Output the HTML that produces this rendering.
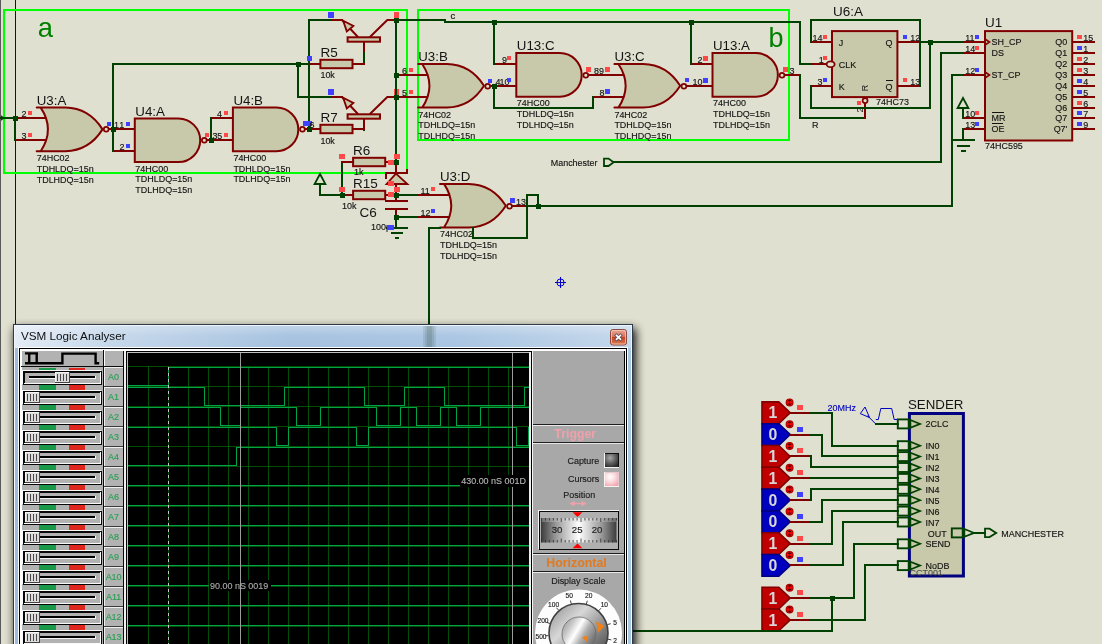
<!DOCTYPE html>
<html lang="en"><head><meta charset="utf-8"><title>Manchester encoder schematic - VSM Logic Analyser</title>
<style>
html,body{margin:0;padding:0;background:#e0e0d0;}
body{width:1102px;height:644px;overflow:hidden;}
svg{display:block;will-change:transform;font-family:'Liberation Sans', Arial, sans-serif;}
svg text{font-family:'Liberation Sans',Arial,sans-serif;}
</style></head><body>
<svg width="1102" height="644" viewBox="0 0 1102 644">
<rect x="0" y="0" width="1102" height="644" fill="#e0e0d0"/>
<rect x="0" y="0" width="1" height="644" fill="#5a5a5a" shape-rendering="crispEdges"/>
<rect x="15" y="0" width="1" height="330" fill="#0000c0" shape-rendering="crispEdges"/>
<rect x="4" y="10" width="403" height="163" fill="none" stroke="#00ff00" stroke-width="2" shape-rendering="crispEdges"/>
<rect x="418" y="10" width="371" height="130" fill="none" stroke="#00ff00" stroke-width="2" shape-rendering="crispEdges"/>
<text x="37.8" y="36.6" font-size="27.4" fill="#008000" text-anchor="start" font-weight="normal">a</text>
<text x="768.5" y="47.2" font-size="27" fill="#008000" text-anchor="start" font-weight="normal">b</text>
<polyline points="0,118 15,118 15,140" fill="none" stroke="#004000" stroke-width="2" stroke-linejoin="miter" stroke-linecap="square" shape-rendering="crispEdges"/>
<path d="M1,115.2 L5,118 L1,120.8 Z" fill="#004000"/>
<line x1="14.9" y1="118" x2="46.51" y2="118" stroke="#800000" stroke-width="2" stroke-linecap="butt" shape-rendering="crispEdges"/>
<line x1="14.9" y1="140" x2="46.51" y2="140" stroke="#800000" stroke-width="2" stroke-linecap="butt" shape-rendering="crispEdges"/>
<path d="M36.7,107.6 L65.476,107.6 Q89.02,108.036 102.5,129.4 Q89.02,150.764 65.476,151.2 L36.7,151.2 L40.7,151.2 Q55.2,129.4 40.7,107.6 L36.7,107.6 Z" fill="#c8c8aa" stroke="#800000" stroke-width="2" stroke-linejoin="round"/>
<line x1="108.1" y1="129" x2="123.9" y2="129" stroke="#800000" stroke-width="2" stroke-linecap="butt" shape-rendering="crispEdges"/>
<circle cx="106.2" cy="129.3" r="2.4" fill="#e0e0d0" stroke="#800000" stroke-width="1.7"/>
<text x="36.7" y="104.6" font-size="13.3" fill="#141414" text-anchor="start" font-weight="normal">U3:A</text>
<text transform="translate(36.7,161.1) scale(0.925,1)" font-size="9.7" fill="#141414" text-anchor="start" font-weight="normal" stroke="#141414" stroke-width="0.15">74HC02</text>
<text transform="translate(36.7,171.8) scale(0.925,1)" font-size="9.7" fill="#141414" text-anchor="start" font-weight="normal" stroke="#141414" stroke-width="0.15">TDHLDQ=15n</text>
<text transform="translate(36.7,182.5) scale(0.925,1)" font-size="9.7" fill="#141414" text-anchor="start" font-weight="normal" stroke="#141414" stroke-width="0.15">TDLHDQ=15n</text>
<text transform="translate(21.5,117) scale(0.925,1)" font-size="9.7" fill="#141414" text-anchor="start" font-weight="normal" stroke="#141414" stroke-width="0.15">2</text>
<rect x="28" y="111" width="4" height="4" fill="#ff4848" shape-rendering="crispEdges"/>
<text transform="translate(21.5,139) scale(0.925,1)" font-size="9.7" fill="#141414" text-anchor="start" font-weight="normal" stroke="#141414" stroke-width="0.15">3</text>
<rect x="28" y="133" width="4" height="4" fill="#ff4848" shape-rendering="crispEdges"/>
<polyline points="113,64 113,151" fill="none" stroke="#004000" stroke-width="2" stroke-linejoin="miter" stroke-linecap="square" shape-rendering="crispEdges"/>
<polyline points="113,64 298,64 309,64" fill="none" stroke="#004000" stroke-width="2" stroke-linejoin="miter" stroke-linecap="square" shape-rendering="crispEdges"/>
<rect x="107" y="122" width="4" height="4" fill="#4040ff" shape-rendering="crispEdges"/>
<rect x="126" y="122" width="4" height="4" fill="#4040ff" shape-rendering="crispEdges"/>
<text transform="translate(114,127.8) scale(0.925,1)" font-size="9.7" fill="#141414" text-anchor="start" font-weight="normal" stroke="#141414" stroke-width="0.15">1</text>
<text transform="translate(119.3,127.8) scale(0.925,1)" font-size="9.7" fill="#141414" text-anchor="start" font-weight="normal" stroke="#141414" stroke-width="0.15">1</text>
<line x1="113" y1="129" x2="134.8" y2="129" stroke="#800000" stroke-width="2" stroke-linecap="butt" shape-rendering="crispEdges"/>
<line x1="113" y1="151" x2="134.8" y2="151" stroke="#800000" stroke-width="2" stroke-linecap="butt" shape-rendering="crispEdges"/>
<path d="M134.8,118.5 L178.4,118.5 A21.8,21.8 0 0 1 178.4,162.1 L134.8,162.1 Z" fill="#c8c8aa" stroke="#800000" stroke-width="2" stroke-linejoin="miter"/>
<line x1="206.2" y1="140" x2="222" y2="140" stroke="#800000" stroke-width="2" stroke-linecap="butt" shape-rendering="crispEdges"/>
<circle cx="204.3" cy="140.3" r="2.4" fill="#e0e0d0" stroke="#800000" stroke-width="1.7"/>
<text x="135.3" y="115.7" font-size="13.3" fill="#141414" text-anchor="start" font-weight="normal">U4:A</text>
<text transform="translate(135.3,171.6) scale(0.925,1)" font-size="9.7" fill="#141414" text-anchor="start" font-weight="normal" stroke="#141414" stroke-width="0.15">74HC00</text>
<text transform="translate(135.3,182.45) scale(0.925,1)" font-size="9.7" fill="#141414" text-anchor="start" font-weight="normal" stroke="#141414" stroke-width="0.15">TDHLDQ=15n</text>
<text transform="translate(135.3,193.3) scale(0.925,1)" font-size="9.7" fill="#141414" text-anchor="start" font-weight="normal" stroke="#141414" stroke-width="0.15">TDLHDQ=15n</text>
<text transform="translate(119.5,149.8) scale(0.925,1)" font-size="9.7" fill="#141414" text-anchor="start" font-weight="normal" stroke="#141414" stroke-width="0.15">2</text>
<rect x="126" y="144" width="4" height="4" fill="#4040ff" shape-rendering="crispEdges"/>
<polyline points="211,118 211,140" fill="none" stroke="#004000" stroke-width="2" stroke-linejoin="miter" stroke-linecap="square" shape-rendering="crispEdges"/>
<line x1="211.1" y1="118" x2="232.9" y2="118" stroke="#800000" stroke-width="2" stroke-linecap="butt" shape-rendering="crispEdges"/>
<line x1="211.1" y1="140" x2="232.9" y2="140" stroke="#800000" stroke-width="2" stroke-linecap="butt" shape-rendering="crispEdges"/>
<path d="M232.9,107.6 L276.5,107.6 A21.8,21.8 0 0 1 276.5,151.2 L232.9,151.2 Z" fill="#c8c8aa" stroke="#800000" stroke-width="2" stroke-linejoin="miter"/>
<line x1="304.3" y1="129" x2="320.1" y2="129" stroke="#800000" stroke-width="2" stroke-linecap="butt" shape-rendering="crispEdges"/>
<circle cx="302.4" cy="129.3" r="2.4" fill="#e0e0d0" stroke="#800000" stroke-width="1.7"/>
<text x="233.4" y="104.8" font-size="13.3" fill="#141414" text-anchor="start" font-weight="normal">U4:B</text>
<text transform="translate(233.4,160.7) scale(0.925,1)" font-size="9.7" fill="#141414" text-anchor="start" font-weight="normal" stroke="#141414" stroke-width="0.15">74HC00</text>
<text transform="translate(233.4,171.55) scale(0.925,1)" font-size="9.7" fill="#141414" text-anchor="start" font-weight="normal" stroke="#141414" stroke-width="0.15">TDHLDQ=15n</text>
<text transform="translate(233.4,182.4) scale(0.925,1)" font-size="9.7" fill="#141414" text-anchor="start" font-weight="normal" stroke="#141414" stroke-width="0.15">TDLHDQ=15n</text>
<text transform="translate(217,116.8) scale(0.925,1)" font-size="9.7" fill="#141414" text-anchor="start" font-weight="normal" stroke="#141414" stroke-width="0.15">4</text>
<rect x="224" y="111" width="4" height="4" fill="#ff4848" shape-rendering="crispEdges"/>
<rect x="205" y="133" width="4" height="4" fill="#ff4848" shape-rendering="crispEdges"/>
<rect x="224" y="133" width="4" height="4" fill="#ff4848" shape-rendering="crispEdges"/>
<text transform="translate(212.5,138.8) scale(0.925,1)" font-size="9.7" fill="#141414" text-anchor="start" font-weight="normal" stroke="#141414" stroke-width="0.15">3</text>
<text transform="translate(217.3,138.8) scale(0.925,1)" font-size="9.7" fill="#141414" text-anchor="start" font-weight="normal" stroke="#141414" stroke-width="0.15">5</text>
<polyline points="298,64 298,97 331,97" fill="none" stroke="#004000" stroke-width="2" stroke-linejoin="miter" stroke-linecap="square" shape-rendering="crispEdges"/>
<polyline points="331,20 309,20 309,129" fill="none" stroke="#004000" stroke-width="2" stroke-linejoin="miter" stroke-linecap="square" shape-rendering="crispEdges"/>
<rect x="303" y="121" width="5" height="5" fill="#4040ff" shape-rendering="crispEdges"/>
<rect x="307" y="121" width="5" height="5" fill="#4040ff" shape-rendering="crispEdges"/>
<text transform="translate(309.5,127.5) scale(0.925,1)" font-size="9.7" fill="#141414" text-anchor="start" font-weight="normal" stroke="#141414" stroke-width="0.15">6</text>
<rect x="307" y="56" width="5" height="5" fill="#4040ff" shape-rendering="crispEdges"/>
<line x1="309.2" y1="64" x2="363.7" y2="64" stroke="#800000" stroke-width="2" stroke-linecap="butt" shape-rendering="crispEdges"/>
<rect x="320.4" y="59.8" width="32.1" height="8.4" fill="#c8c8aa" stroke="#800000" stroke-width="2"/>
<text x="320.4" y="56.8" font-size="13.5" fill="#141414" text-anchor="start" font-weight="normal">R5</text>
<text transform="translate(320.4,77.8) scale(0.925,1)" font-size="9.7" fill="#141414" text-anchor="start" font-weight="normal" stroke="#141414" stroke-width="0.15">10k</text>
<line x1="309.2" y1="129" x2="363.7" y2="129" stroke="#800000" stroke-width="2" stroke-linecap="butt" shape-rendering="crispEdges"/>
<rect x="320.4" y="124.8" width="32.1" height="8.4" fill="#c8c8aa" stroke="#800000" stroke-width="2"/>
<text x="320.4" y="121.8" font-size="13.5" fill="#141414" text-anchor="start" font-weight="normal">R7</text>
<text transform="translate(320.4,144) scale(0.925,1)" font-size="9.7" fill="#141414" text-anchor="start" font-weight="normal" stroke="#141414" stroke-width="0.15">10k</text>
<line x1="331" y1="20" x2="342.5" y2="20" stroke="#800000" stroke-width="2" stroke-linecap="butt" shape-rendering="crispEdges"/>
<line x1="387" y1="20" x2="396.4" y2="20" stroke="#800000" stroke-width="2" stroke-linecap="butt" shape-rendering="crispEdges"/>
<path d="M342,20 L357.7,36.8 M370.2,36.8 L387.3,20" stroke="#800000" stroke-width="2" fill="none" stroke-linecap="round"/>
<path d="M343.2,20.8 L353.4,26 L346.8,31.4 Z" fill="#c8c8aa" stroke="#800000" stroke-width="1.8" stroke-linejoin="miter"/>
<rect x="347.6" y="37.3" width="32.4" height="4.4" fill="#c8c8aa" stroke="#800000" stroke-width="2"/>
<line x1="364" y1="42" x2="364" y2="53" stroke="#800000" stroke-width="2" stroke-linecap="butt" shape-rendering="crispEdges"/>
<polyline points="364,53 364,64" fill="none" stroke="#004000" stroke-width="2" stroke-linejoin="miter" stroke-linecap="square" shape-rendering="crispEdges"/>
<line x1="353" y1="64" x2="365" y2="64" stroke="#800000" stroke-width="2" stroke-linecap="butt" shape-rendering="crispEdges"/>
<line x1="331" y1="97" x2="342.5" y2="97" stroke="#800000" stroke-width="2" stroke-linecap="butt" shape-rendering="crispEdges"/>
<line x1="387" y1="97" x2="396.4" y2="97" stroke="#800000" stroke-width="2" stroke-linecap="butt" shape-rendering="crispEdges"/>
<path d="M342,97 L357.7,113.8 M370.2,113.8 L387.3,97" stroke="#800000" stroke-width="2" fill="none" stroke-linecap="round"/>
<path d="M343.2,97.8 L353.4,103 L346.8,108.4 Z" fill="#c8c8aa" stroke="#800000" stroke-width="1.8" stroke-linejoin="miter"/>
<rect x="347.6" y="114.3" width="32.4" height="4.4" fill="#c8c8aa" stroke="#800000" stroke-width="2"/>
<line x1="364" y1="119" x2="364" y2="130" stroke="#800000" stroke-width="2" stroke-linecap="butt" shape-rendering="crispEdges"/>
<polyline points="364,130 364,129" fill="none" stroke="#004000" stroke-width="2" stroke-linejoin="miter" stroke-linecap="square" shape-rendering="crispEdges"/>
<line x1="353" y1="129" x2="365" y2="129" stroke="#800000" stroke-width="2" stroke-linecap="butt" shape-rendering="crispEdges"/>
<rect x="328" y="12" width="6" height="6" fill="#4040ff" shape-rendering="crispEdges"/>
<rect x="328" y="89" width="6" height="6" fill="#4040ff" shape-rendering="crispEdges"/>
<rect x="394" y="12" width="5" height="5" fill="#ff4848" shape-rendering="crispEdges"/>
<rect x="394" y="12" width="5" height="6" fill="#ff4848" shape-rendering="crispEdges"/>
<rect x="394" y="89" width="5" height="6" fill="#ff4848" shape-rendering="crispEdges"/>
<polyline points="396,20 396,173" fill="none" stroke="#004000" stroke-width="2" stroke-linejoin="miter" stroke-linecap="square" shape-rendering="crispEdges"/>
<polyline points="396,20 445,20" fill="none" stroke="#004000" stroke-width="2" stroke-linejoin="miter" stroke-linecap="square" shape-rendering="crispEdges"/>
<polyline points="445,22 800,22 800,64 811,64" fill="none" stroke="#004000" stroke-width="2" stroke-linejoin="miter" stroke-linecap="square" shape-rendering="crispEdges"/>
<text x="450.5" y="19.4" font-size="9.5" fill="#141414" text-anchor="start" font-weight="normal" stroke="#141414" stroke-width="0.15">c</text>
<polyline points="494,22 494,64" fill="none" stroke="#004000" stroke-width="2" stroke-linejoin="miter" stroke-linecap="square" shape-rendering="crispEdges"/>
<polyline points="691,22 691,64" fill="none" stroke="#004000" stroke-width="2" stroke-linejoin="miter" stroke-linecap="square" shape-rendering="crispEdges"/>
<polyline points="342,162 342,195" fill="none" stroke="#004000" stroke-width="2" stroke-linejoin="miter" stroke-linecap="square" shape-rendering="crispEdges"/>
<line x1="341.9" y1="162" x2="396.4" y2="162" stroke="#800000" stroke-width="2" stroke-linecap="butt" shape-rendering="crispEdges"/>
<rect x="353.1" y="157.8" width="32.1" height="8.4" fill="#c8c8aa" stroke="#800000" stroke-width="2"/>
<text x="353.1" y="154.8" font-size="13.5" fill="#141414" text-anchor="start" font-weight="normal">R6</text>
<text transform="translate(354,175.2) scale(0.925,1)" font-size="9.7" fill="#141414" text-anchor="start" font-weight="normal" stroke="#141414" stroke-width="0.15">1k</text>
<line x1="341.9" y1="195" x2="396.4" y2="195" stroke="#800000" stroke-width="2" stroke-linecap="butt" shape-rendering="crispEdges"/>
<rect x="353.1" y="190.8" width="32.1" height="8.4" fill="#c8c8aa" stroke="#800000" stroke-width="2"/>
<text x="353.1" y="187.8" font-size="13.5" fill="#141414" text-anchor="start" font-weight="normal">R15</text>
<text transform="translate(342,208.6) scale(0.925,1)" font-size="9.7" fill="#141414" text-anchor="start" font-weight="normal" stroke="#141414" stroke-width="0.15">10k</text>
<polyline points="320,184 320,195 342,195" fill="none" stroke="#004000" stroke-width="2" stroke-linejoin="miter" stroke-linecap="square" shape-rendering="crispEdges"/>
<path d="M320,174 L325.4,184 L314.6,184 Z" fill="none" stroke="#004000" stroke-width="1.8"/>
<line x1="396" y1="162" x2="396" y2="195" stroke="#800000" stroke-width="2" stroke-linecap="butt" shape-rendering="crispEdges"/>
<path d="M396,173.6 L407.4,184 L386.6,184 Z" fill="#c8c8aa" stroke="#800000" stroke-width="1.8"/>
<path d="M386,178.5 L386,173 L407,173 L407,168.5" fill="none" stroke="#800000" stroke-width="2" shape-rendering="crispEdges"/>
<line x1="396" y1="195" x2="396" y2="201" stroke="#800000" stroke-width="2" stroke-linecap="butt" shape-rendering="crispEdges"/>
<line x1="396" y1="209" x2="396" y2="217" stroke="#800000" stroke-width="2" stroke-linecap="butt" shape-rendering="crispEdges"/>
<line x1="385" y1="201" x2="408" y2="201" stroke="#800000" stroke-width="2" stroke-linecap="butt" shape-rendering="crispEdges"/>
<line x1="385" y1="209" x2="408" y2="209" stroke="#800000" stroke-width="2" stroke-linecap="butt" shape-rendering="crispEdges"/>
<polyline points="396,217 396,228" fill="none" stroke="#004000" stroke-width="2" stroke-linejoin="miter" stroke-linecap="square" shape-rendering="crispEdges"/>
<line x1="386" y1="228" x2="408" y2="228" stroke="#004000" stroke-width="2" stroke-linecap="butt" shape-rendering="crispEdges"/>
<line x1="390.5" y1="233" x2="403" y2="233" stroke="#004000" stroke-width="2" stroke-linecap="butt" shape-rendering="crispEdges"/>
<line x1="394.5" y1="238" x2="399" y2="238" stroke="#004000" stroke-width="2" stroke-linecap="butt" shape-rendering="crispEdges"/>
<text x="359.5" y="216.8" font-size="13.5" fill="#141414" text-anchor="start" font-weight="normal">C6</text>
<text transform="translate(371,230) scale(0.925,1)" font-size="9.7" fill="#141414" text-anchor="start" font-weight="normal" stroke="#141414" stroke-width="0.15">100p</text>
<rect x="387" y="225" width="5" height="5" fill="#4040ff" shape-rendering="crispEdges"/>
<rect x="387" y="225" width="7" height="5" fill="#4040ff" shape-rendering="crispEdges"/>
<rect x="339" y="154" width="6" height="5" fill="#ff4848" shape-rendering="crispEdges"/>
<rect x="339" y="187" width="6" height="5" fill="#ff4848" shape-rendering="crispEdges"/>
<rect x="394" y="154" width="6" height="5" fill="#ff4848" shape-rendering="crispEdges"/>
<rect x="388" y="160" width="6" height="5" fill="#ff4848" shape-rendering="crispEdges"/>
<rect x="388" y="181" width="6" height="5" fill="#ff4848" shape-rendering="crispEdges"/>
<rect x="394" y="187" width="6" height="5" fill="#ff4848" shape-rendering="crispEdges"/>
<rect x="388" y="192" width="6" height="5" fill="#ff4848" shape-rendering="crispEdges"/>
<polyline points="396,75 399,75" fill="none" stroke="#004000" stroke-width="2" stroke-linejoin="miter" stroke-linecap="square" shape-rendering="crispEdges"/>
<polyline points="396,97 399,97" fill="none" stroke="#004000" stroke-width="2" stroke-linejoin="miter" stroke-linecap="square" shape-rendering="crispEdges"/>
<line x1="396.4" y1="75" x2="428.01" y2="75" stroke="#800000" stroke-width="2" stroke-linecap="butt" shape-rendering="crispEdges"/>
<line x1="396.4" y1="97" x2="428.01" y2="97" stroke="#800000" stroke-width="2" stroke-linecap="butt" shape-rendering="crispEdges"/>
<path d="M418.2,64 L446.976,64 Q470.52,64.436 484,85.8 Q470.52,107.164 446.976,107.6 L418.2,107.6 L422.2,107.6 Q436.7,85.8 422.2,64 L418.2,64 Z" fill="#c8c8aa" stroke="#800000" stroke-width="2" stroke-linejoin="round"/>
<line x1="489.6" y1="86" x2="505.4" y2="86" stroke="#800000" stroke-width="2" stroke-linecap="butt" shape-rendering="crispEdges"/>
<circle cx="487.7" cy="86.3" r="2.4" fill="#e0e0d0" stroke="#800000" stroke-width="1.7"/>
<text x="418.2" y="61" font-size="13.3" fill="#141414" text-anchor="start" font-weight="normal">U3:B</text>
<text transform="translate(418.2,117.5) scale(0.925,1)" font-size="9.7" fill="#141414" text-anchor="start" font-weight="normal" stroke="#141414" stroke-width="0.15">74HC02</text>
<text transform="translate(418.2,128.2) scale(0.925,1)" font-size="9.7" fill="#141414" text-anchor="start" font-weight="normal" stroke="#141414" stroke-width="0.15">TDHLDQ=15n</text>
<text transform="translate(418.2,138.9) scale(0.925,1)" font-size="9.7" fill="#141414" text-anchor="start" font-weight="normal" stroke="#141414" stroke-width="0.15">TDLHDQ=15n</text>
<text transform="translate(402,73.8) scale(0.925,1)" font-size="9.7" fill="#141414" text-anchor="start" font-weight="normal" stroke="#141414" stroke-width="0.15">6</text>
<rect x="409" y="68" width="4" height="4" fill="#ff4848" shape-rendering="crispEdges"/>
<text transform="translate(402,95.8) scale(0.925,1)" font-size="9.7" fill="#141414" text-anchor="start" font-weight="normal" stroke="#141414" stroke-width="0.15">5</text>
<rect x="409" y="90" width="4" height="4" fill="#ff4848" shape-rendering="crispEdges"/>
<rect x="488" y="79" width="4" height="4" fill="#4040ff" shape-rendering="crispEdges"/>
<polyline points="494,86 494,108 593,108 593,97" fill="none" stroke="#004000" stroke-width="2" stroke-linejoin="miter" stroke-linecap="square" shape-rendering="crispEdges"/>
<line x1="494.5" y1="64" x2="516.3" y2="64" stroke="#800000" stroke-width="2" stroke-linecap="butt" shape-rendering="crispEdges"/>
<line x1="494.5" y1="86" x2="516.3" y2="86" stroke="#800000" stroke-width="2" stroke-linecap="butt" shape-rendering="crispEdges"/>
<path d="M516.3,53.1 L559.9,53.1 A21.8,21.8 0 0 1 559.9,96.7 L516.3,96.7 Z" fill="#c8c8aa" stroke="#800000" stroke-width="2" stroke-linejoin="miter"/>
<line x1="587.7" y1="75" x2="603.5" y2="75" stroke="#800000" stroke-width="2" stroke-linecap="butt" shape-rendering="crispEdges"/>
<circle cx="585.8" cy="75.3" r="2.4" fill="#e0e0d0" stroke="#800000" stroke-width="1.7"/>
<text x="516.8" y="50.3" font-size="13.3" fill="#141414" text-anchor="start" font-weight="normal">U13:C</text>
<text transform="translate(516.8,106.2) scale(0.925,1)" font-size="9.7" fill="#141414" text-anchor="start" font-weight="normal" stroke="#141414" stroke-width="0.15">74HC00</text>
<text transform="translate(516.8,117.05) scale(0.925,1)" font-size="9.7" fill="#141414" text-anchor="start" font-weight="normal" stroke="#141414" stroke-width="0.15">TDHLDQ=15n</text>
<text transform="translate(516.8,127.9) scale(0.925,1)" font-size="9.7" fill="#141414" text-anchor="start" font-weight="normal" stroke="#141414" stroke-width="0.15">TDLHDQ=15n</text>
<text transform="translate(502,62.8) scale(0.925,1)" font-size="9.7" fill="#141414" text-anchor="start" font-weight="normal" stroke="#141414" stroke-width="0.15">9</text>
<rect x="507" y="56" width="4" height="4" fill="#ff4848" shape-rendering="crispEdges"/>
<text transform="translate(495.5,84.8) scale(0.925,1)" font-size="9.7" fill="#141414" text-anchor="start" font-weight="normal" stroke="#141414" stroke-width="0.15">4</text>
<text transform="translate(499.5,84.8) scale(0.925,1)" font-size="9.7" fill="#141414" text-anchor="start" font-weight="normal" stroke="#141414" stroke-width="0.15">10</text>
<rect x="507" y="78" width="4" height="4" fill="#4040ff" shape-rendering="crispEdges"/>
<rect x="586" y="67" width="5" height="5" fill="#ff4848" shape-rendering="crispEdges"/>
<rect x="605" y="67" width="5" height="5" fill="#ff4848" shape-rendering="crispEdges"/>
<text transform="translate(594,73.8) scale(0.925,1)" font-size="9.7" fill="#141414" text-anchor="start" font-weight="normal" stroke="#141414" stroke-width="0.15">8</text>
<text transform="translate(599,73.8) scale(0.925,1)" font-size="9.7" fill="#141414" text-anchor="start" font-weight="normal" stroke="#141414" stroke-width="0.15">9</text>
<line x1="592.6" y1="75" x2="624.21" y2="75" stroke="#800000" stroke-width="2" stroke-linecap="butt" shape-rendering="crispEdges"/>
<line x1="592.6" y1="97" x2="624.21" y2="97" stroke="#800000" stroke-width="2" stroke-linecap="butt" shape-rendering="crispEdges"/>
<path d="M614.4,64 L643.176,64 Q666.72,64.436 680.2,85.8 Q666.72,107.164 643.176,107.6 L614.4,107.6 L618.4,107.6 Q632.9,85.8 618.4,64 L614.4,64 Z" fill="#c8c8aa" stroke="#800000" stroke-width="2" stroke-linejoin="round"/>
<line x1="685.8" y1="86" x2="701.6" y2="86" stroke="#800000" stroke-width="2" stroke-linecap="butt" shape-rendering="crispEdges"/>
<circle cx="683.9" cy="86.3" r="2.4" fill="#e0e0d0" stroke="#800000" stroke-width="1.7"/>
<text x="614.4" y="61" font-size="13.3" fill="#141414" text-anchor="start" font-weight="normal">U3:C</text>
<text transform="translate(614.4,117.5) scale(0.925,1)" font-size="9.7" fill="#141414" text-anchor="start" font-weight="normal" stroke="#141414" stroke-width="0.15">74HC02</text>
<text transform="translate(614.4,128.2) scale(0.925,1)" font-size="9.7" fill="#141414" text-anchor="start" font-weight="normal" stroke="#141414" stroke-width="0.15">TDHLDQ=15n</text>
<text transform="translate(614.4,138.9) scale(0.925,1)" font-size="9.7" fill="#141414" text-anchor="start" font-weight="normal" stroke="#141414" stroke-width="0.15">TDLHDQ=15n</text>
<text transform="translate(599.5,95.8) scale(0.925,1)" font-size="9.7" fill="#141414" text-anchor="start" font-weight="normal" stroke="#141414" stroke-width="0.15">8</text>
<rect x="605" y="89" width="5" height="5" fill="#4040ff" shape-rendering="crispEdges"/>
<rect x="685" y="78" width="4" height="4" fill="#4040ff" shape-rendering="crispEdges"/>
<rect x="703" y="78" width="5" height="5" fill="#4040ff" shape-rendering="crispEdges"/>
<text transform="translate(692.5,84.8) scale(0.925,1)" font-size="9.7" fill="#141414" text-anchor="start" font-weight="normal" stroke="#141414" stroke-width="0.15">10</text>
<line x1="690.7" y1="64" x2="712.5" y2="64" stroke="#800000" stroke-width="2" stroke-linecap="butt" shape-rendering="crispEdges"/>
<line x1="690.7" y1="86" x2="712.5" y2="86" stroke="#800000" stroke-width="2" stroke-linecap="butt" shape-rendering="crispEdges"/>
<path d="M712.5,53.1 L756.1,53.1 A21.8,21.8 0 0 1 756.1,96.7 L712.5,96.7 Z" fill="#c8c8aa" stroke="#800000" stroke-width="2" stroke-linejoin="miter"/>
<line x1="783.9" y1="75" x2="799.7" y2="75" stroke="#800000" stroke-width="2" stroke-linecap="butt" shape-rendering="crispEdges"/>
<circle cx="782" cy="75.3" r="2.4" fill="#e0e0d0" stroke="#800000" stroke-width="1.7"/>
<text x="713" y="50.3" font-size="13.3" fill="#141414" text-anchor="start" font-weight="normal">U13:A</text>
<text transform="translate(713,106.2) scale(0.925,1)" font-size="9.7" fill="#141414" text-anchor="start" font-weight="normal" stroke="#141414" stroke-width="0.15">74HC00</text>
<text transform="translate(713,117.05) scale(0.925,1)" font-size="9.7" fill="#141414" text-anchor="start" font-weight="normal" stroke="#141414" stroke-width="0.15">TDHLDQ=15n</text>
<text transform="translate(713,127.9) scale(0.925,1)" font-size="9.7" fill="#141414" text-anchor="start" font-weight="normal" stroke="#141414" stroke-width="0.15">TDLHDQ=15n</text>
<text transform="translate(697.5,62.8) scale(0.925,1)" font-size="9.7" fill="#141414" text-anchor="start" font-weight="normal" stroke="#141414" stroke-width="0.15">2</text>
<rect x="703" y="56" width="5" height="5" fill="#ff4848" shape-rendering="crispEdges"/>
<rect x="783" y="67" width="5" height="5" fill="#ff4848" shape-rendering="crispEdges"/>
<text transform="translate(789.5,73.8) scale(0.925,1)" font-size="9.7" fill="#141414" text-anchor="start" font-weight="normal" stroke="#141414" stroke-width="0.15">3</text>
<line x1="788.8" y1="75" x2="800" y2="75" stroke="#800000" stroke-width="2" stroke-linecap="butt" shape-rendering="crispEdges"/>
<polyline points="800,75 800,118 865,118" fill="none" stroke="#004000" stroke-width="2" stroke-linejoin="miter" stroke-linecap="square" shape-rendering="crispEdges"/>
<line x1="865" y1="119" x2="865" y2="103" stroke="#800000" stroke-width="2" stroke-linecap="butt" shape-rendering="crispEdges"/>
<text transform="translate(812,127.5) scale(0.925,1)" font-size="9.7" fill="#141414" text-anchor="start" font-weight="normal" stroke="#141414" stroke-width="0.15">R</text>
<line x1="810.6" y1="42" x2="832.4" y2="42" stroke="#800000" stroke-width="2" stroke-linecap="butt" shape-rendering="crispEdges"/>
<line x1="897.8" y1="42" x2="919.6" y2="42" stroke="#800000" stroke-width="2" stroke-linecap="butt" shape-rendering="crispEdges"/>
<line x1="810.6" y1="64" x2="832.4" y2="64" stroke="#800000" stroke-width="2" stroke-linecap="butt" shape-rendering="crispEdges"/>
<line x1="810.6" y1="86" x2="832.4" y2="86" stroke="#800000" stroke-width="2" stroke-linecap="butt" shape-rendering="crispEdges"/>
<line x1="897.8" y1="86" x2="919.6" y2="86" stroke="#800000" stroke-width="2" stroke-linecap="butt" shape-rendering="crispEdges"/>
<rect x="832" y="31.1" width="65.4" height="66" fill="#c8c8aa" stroke="#800000" stroke-width="2"/>
<ellipse cx="830.6" cy="64.2" rx="4" ry="2.9" fill="#e0e0d0" stroke="#800000" stroke-width="1.8"/>
<circle cx="865.1" cy="100.6" r="2.5" fill="#e0e0d0" stroke="#800000" stroke-width="1.7"/>
<text x="833" y="15.5" font-size="13.5" fill="#141414" text-anchor="start" font-weight="normal">U6:A</text>
<text transform="translate(838.7,46) scale(0.925,1)" font-size="9.7" fill="#141414" text-anchor="start" font-weight="normal" stroke="#141414" stroke-width="0.15">J</text>
<text transform="translate(838.7,67.8) scale(0.925,1)" font-size="9.7" fill="#141414" text-anchor="start" font-weight="normal" stroke="#141414" stroke-width="0.15">CLK</text>
<text transform="translate(838.7,89.6) scale(0.925,1)" font-size="9.7" fill="#141414" text-anchor="start" font-weight="normal" stroke="#141414" stroke-width="0.15">K</text>
<text transform="translate(885.5,46) scale(0.925,1)" font-size="9.7" fill="#141414" text-anchor="start" font-weight="normal" stroke="#141414" stroke-width="0.15">Q</text>
<text transform="translate(885.5,89.6) scale(0.925,1)" font-size="9.7" fill="#141414" text-anchor="start" font-weight="normal" stroke="#141414" stroke-width="0.15">Q</text>
<line x1="885.5" y1="80.5" x2="892.5" y2="80.5" stroke="#141414" stroke-width="1" stroke-linecap="butt" shape-rendering="crispEdges"/>
<text transform="translate(867.5,91.2) rotate(-90)" font-size="9" fill="#141414">R</text>
<text transform="translate(862.7,112.6) rotate(-90)" font-size="9" fill="#141414">2</text>
<rect x="857" y="101" width="4" height="4" fill="#ff4848" shape-rendering="crispEdges"/>
<text transform="translate(876,104.6) scale(0.925,1)" font-size="9.7" fill="#141414" text-anchor="start" font-weight="normal" stroke="#141414" stroke-width="0.15">74HC73</text>
<text transform="translate(812.5,40.8) scale(0.925,1)" font-size="9.7" fill="#141414" text-anchor="start" font-weight="normal" stroke="#141414" stroke-width="0.15">14</text>
<rect x="823" y="35" width="4" height="4" fill="#ff4848" shape-rendering="crispEdges"/>
<text transform="translate(818.8,62.8) scale(0.925,1)" font-size="9.7" fill="#141414" text-anchor="start" font-weight="normal" stroke="#141414" stroke-width="0.15">1</text>
<rect x="823" y="56" width="4" height="4" fill="#ff4848" shape-rendering="crispEdges"/>
<text transform="translate(817.5,84.8) scale(0.925,1)" font-size="9.7" fill="#141414" text-anchor="start" font-weight="normal" stroke="#141414" stroke-width="0.15">3</text>
<rect x="823" y="78" width="4" height="4" fill="#4040ff" shape-rendering="crispEdges"/>
<rect x="903" y="35" width="4" height="4" fill="#4040ff" shape-rendering="crispEdges"/>
<text transform="translate(910.3,40.8) scale(0.925,1)" font-size="9.7" fill="#141414" text-anchor="start" font-weight="normal" stroke="#141414" stroke-width="0.15">12</text>
<rect x="903" y="78" width="4" height="4" fill="#ff4848" shape-rendering="crispEdges"/>
<text transform="translate(910.3,84.8) scale(0.925,1)" font-size="9.7" fill="#141414" text-anchor="start" font-weight="normal" stroke="#141414" stroke-width="0.15">13</text>
<polyline points="811,42 811,20 920,20 920,86" fill="none" stroke="#004000" stroke-width="2" stroke-linejoin="miter" stroke-linecap="square" shape-rendering="crispEdges"/>
<polyline points="920,42 963,42" fill="none" stroke="#004000" stroke-width="2" stroke-linejoin="miter" stroke-linecap="square" shape-rendering="crispEdges"/>
<polyline points="930,42 930,108 811,108 811,86" fill="none" stroke="#004000" stroke-width="2" stroke-linejoin="miter" stroke-linecap="square" shape-rendering="crispEdges"/>
<line x1="963.2" y1="42" x2="985" y2="42" stroke="#800000" stroke-width="2" stroke-linecap="butt" shape-rendering="crispEdges"/>
<line x1="963.2" y1="53" x2="985" y2="53" stroke="#800000" stroke-width="2" stroke-linecap="butt" shape-rendering="crispEdges"/>
<line x1="963.2" y1="75" x2="985" y2="75" stroke="#800000" stroke-width="2" stroke-linecap="butt" shape-rendering="crispEdges"/>
<line x1="963.2" y1="118" x2="985" y2="118" stroke="#800000" stroke-width="2" stroke-linecap="butt" shape-rendering="crispEdges"/>
<line x1="963.2" y1="129" x2="985" y2="129" stroke="#800000" stroke-width="2" stroke-linecap="butt" shape-rendering="crispEdges"/>
<line x1="1072.2" y1="42" x2="1095" y2="42" stroke="#800000" stroke-width="2" stroke-linecap="butt" shape-rendering="crispEdges"/>
<line x1="1072.2" y1="53" x2="1095" y2="53" stroke="#800000" stroke-width="2" stroke-linecap="butt" shape-rendering="crispEdges"/>
<line x1="1072.2" y1="64" x2="1095" y2="64" stroke="#800000" stroke-width="2" stroke-linecap="butt" shape-rendering="crispEdges"/>
<line x1="1072.2" y1="75" x2="1095" y2="75" stroke="#800000" stroke-width="2" stroke-linecap="butt" shape-rendering="crispEdges"/>
<line x1="1072.2" y1="86" x2="1095" y2="86" stroke="#800000" stroke-width="2" stroke-linecap="butt" shape-rendering="crispEdges"/>
<line x1="1072.2" y1="97" x2="1095" y2="97" stroke="#800000" stroke-width="2" stroke-linecap="butt" shape-rendering="crispEdges"/>
<line x1="1072.2" y1="108" x2="1095" y2="108" stroke="#800000" stroke-width="2" stroke-linecap="butt" shape-rendering="crispEdges"/>
<line x1="1072.2" y1="118" x2="1095" y2="118" stroke="#800000" stroke-width="2" stroke-linecap="butt" shape-rendering="crispEdges"/>
<line x1="1072.2" y1="129" x2="1095" y2="129" stroke="#800000" stroke-width="2" stroke-linecap="butt" shape-rendering="crispEdges"/>
<rect x="985" y="31.1" width="87.2" height="109.4" fill="#c8c8aa" stroke="#800000" stroke-width="2"/>
<text x="985" y="27" font-size="13.5" fill="#141414" text-anchor="start" font-weight="normal">U1</text>
<text transform="translate(985,149) scale(0.925,1)" font-size="9.7" fill="#141414" text-anchor="start" font-weight="normal" stroke="#141414" stroke-width="0.15">74HC595</text>
<text transform="translate(991.5,44.9) scale(0.925,1)" font-size="9.7" fill="#141414" text-anchor="start" font-weight="normal" stroke="#141414" stroke-width="0.15">SH_CP</text>
<text transform="translate(965.3,40.8) scale(0.925,1)" font-size="9.7" fill="#141414" text-anchor="start" font-weight="normal" stroke="#141414" stroke-width="0.15">11</text>
<rect x="975" y="35" width="4" height="4" fill="#4040ff" shape-rendering="crispEdges"/>
<text transform="translate(991.5,55.9) scale(0.925,1)" font-size="9.7" fill="#141414" text-anchor="start" font-weight="normal" stroke="#141414" stroke-width="0.15">DS</text>
<text transform="translate(965.3,51.8) scale(0.925,1)" font-size="9.7" fill="#141414" text-anchor="start" font-weight="normal" stroke="#141414" stroke-width="0.15">14</text>
<rect x="975" y="46" width="4" height="4" fill="#ff4848" shape-rendering="crispEdges"/>
<text transform="translate(991.5,77.9) scale(0.925,1)" font-size="9.7" fill="#141414" text-anchor="start" font-weight="normal" stroke="#141414" stroke-width="0.15">ST_CP</text>
<text transform="translate(965.3,73.8) scale(0.925,1)" font-size="9.7" fill="#141414" text-anchor="start" font-weight="normal" stroke="#141414" stroke-width="0.15">12</text>
<rect x="975" y="68" width="4" height="4" fill="#4040ff" shape-rendering="crispEdges"/>
<text transform="translate(991.5,120.9) scale(0.925,1)" font-size="9.7" fill="#141414" text-anchor="start" font-weight="normal" stroke="#141414" stroke-width="0.15">MR</text>
<text transform="translate(965.3,116.8) scale(0.925,1)" font-size="9.7" fill="#141414" text-anchor="start" font-weight="normal" stroke="#141414" stroke-width="0.15">10</text>
<rect x="975" y="111" width="4" height="4" fill="#ff4848" shape-rendering="crispEdges"/>
<text transform="translate(991.5,131.9) scale(0.925,1)" font-size="9.7" fill="#141414" text-anchor="start" font-weight="normal" stroke="#141414" stroke-width="0.15">OE</text>
<text transform="translate(965.3,127.8) scale(0.925,1)" font-size="9.7" fill="#141414" text-anchor="start" font-weight="normal" stroke="#141414" stroke-width="0.15">13</text>
<rect x="975" y="122" width="4" height="4" fill="#4040ff" shape-rendering="crispEdges"/>
<line x1="991.5" y1="112.5" x2="1003.6" y2="112.5" stroke="#141414" stroke-width="1" stroke-linecap="butt" shape-rendering="crispEdges"/>
<line x1="991.5" y1="123.5" x2="1002.6" y2="123.5" stroke="#141414" stroke-width="1" stroke-linecap="butt" shape-rendering="crispEdges"/>
<path d="M985,39 L989.5,42 L985,45" fill="none" stroke="#800000" stroke-width="1.6"/>
<path d="M985,72 L989.5,75 L985,78" fill="none" stroke="#800000" stroke-width="1.6"/>
<text transform="translate(1067.3,44.9) scale(0.925,1)" font-size="9.7" fill="#141414" text-anchor="end" font-weight="normal" stroke="#141414" stroke-width="0.15">Q0</text>
<rect x="1077" y="35" width="5" height="4" fill="#ff4848" shape-rendering="crispEdges"/>
<text transform="translate(1083.3,40.8) scale(0.925,1)" font-size="9.7" fill="#141414" text-anchor="start" font-weight="normal" stroke="#141414" stroke-width="0.15">15</text>
<text transform="translate(1067.3,55.9) scale(0.925,1)" font-size="9.7" fill="#141414" text-anchor="end" font-weight="normal" stroke="#141414" stroke-width="0.15">Q1</text>
<rect x="1077" y="46" width="5" height="4" fill="#4040ff" shape-rendering="crispEdges"/>
<text transform="translate(1083.3,51.8) scale(0.925,1)" font-size="9.7" fill="#141414" text-anchor="start" font-weight="normal" stroke="#141414" stroke-width="0.15">1</text>
<text transform="translate(1067.3,66.9) scale(0.925,1)" font-size="9.7" fill="#141414" text-anchor="end" font-weight="normal" stroke="#141414" stroke-width="0.15">Q2</text>
<rect x="1077" y="57" width="5" height="4" fill="#ff4848" shape-rendering="crispEdges"/>
<text transform="translate(1083.3,62.8) scale(0.925,1)" font-size="9.7" fill="#141414" text-anchor="start" font-weight="normal" stroke="#141414" stroke-width="0.15">2</text>
<text transform="translate(1067.3,77.9) scale(0.925,1)" font-size="9.7" fill="#141414" text-anchor="end" font-weight="normal" stroke="#141414" stroke-width="0.15">Q3</text>
<rect x="1077" y="68" width="5" height="4" fill="#ff4848" shape-rendering="crispEdges"/>
<text transform="translate(1083.3,73.8) scale(0.925,1)" font-size="9.7" fill="#141414" text-anchor="start" font-weight="normal" stroke="#141414" stroke-width="0.15">3</text>
<text transform="translate(1067.3,88.9) scale(0.925,1)" font-size="9.7" fill="#141414" text-anchor="end" font-weight="normal" stroke="#141414" stroke-width="0.15">Q4</text>
<rect x="1077" y="79" width="5" height="4" fill="#4040ff" shape-rendering="crispEdges"/>
<text transform="translate(1083.3,84.8) scale(0.925,1)" font-size="9.7" fill="#141414" text-anchor="start" font-weight="normal" stroke="#141414" stroke-width="0.15">4</text>
<text transform="translate(1067.3,99.9) scale(0.925,1)" font-size="9.7" fill="#141414" text-anchor="end" font-weight="normal" stroke="#141414" stroke-width="0.15">Q5</text>
<rect x="1077" y="90" width="5" height="4" fill="#4040ff" shape-rendering="crispEdges"/>
<text transform="translate(1083.3,95.8) scale(0.925,1)" font-size="9.7" fill="#141414" text-anchor="start" font-weight="normal" stroke="#141414" stroke-width="0.15">5</text>
<text transform="translate(1067.3,110.9) scale(0.925,1)" font-size="9.7" fill="#141414" text-anchor="end" font-weight="normal" stroke="#141414" stroke-width="0.15">Q6</text>
<rect x="1077" y="101" width="5" height="4" fill="#ff4848" shape-rendering="crispEdges"/>
<text transform="translate(1083.3,106.8) scale(0.925,1)" font-size="9.7" fill="#141414" text-anchor="start" font-weight="normal" stroke="#141414" stroke-width="0.15">6</text>
<text transform="translate(1067.3,120.9) scale(0.925,1)" font-size="9.7" fill="#141414" text-anchor="end" font-weight="normal" stroke="#141414" stroke-width="0.15">Q7</text>
<rect x="1077" y="111" width="5" height="4" fill="#4040ff" shape-rendering="crispEdges"/>
<text transform="translate(1083.3,116.8) scale(0.925,1)" font-size="9.7" fill="#141414" text-anchor="start" font-weight="normal" stroke="#141414" stroke-width="0.15">7</text>
<text transform="translate(1067.3,131.9) scale(0.925,1)" font-size="9.7" fill="#141414" text-anchor="end" font-weight="normal" stroke="#141414" stroke-width="0.15">Q7'</text>
<rect x="1077" y="122" width="5" height="4" fill="#4040ff" shape-rendering="crispEdges"/>
<text transform="translate(1083.3,127.8) scale(0.925,1)" font-size="9.7" fill="#141414" text-anchor="start" font-weight="normal" stroke="#141414" stroke-width="0.15">9</text>
<polyline points="963,53 941,53 941,162 614,162" fill="none" stroke="#004000" stroke-width="2" stroke-linejoin="miter" stroke-linecap="square" shape-rendering="crispEdges"/>
<polyline points="963,75 952,75 952,206 538,206" fill="none" stroke="#004000" stroke-width="2" stroke-linejoin="miter" stroke-linecap="square" shape-rendering="crispEdges"/>
<polyline points="963,118 963,108" fill="none" stroke="#004000" stroke-width="2" stroke-linejoin="miter" stroke-linecap="square" shape-rendering="crispEdges"/>
<path d="M963,98 L968.4,108 L957.6,108 Z" fill="none" stroke="#004000" stroke-width="1.8"/>
<polyline points="963,129 963,140" fill="none" stroke="#004000" stroke-width="2" stroke-linejoin="miter" stroke-linecap="square" shape-rendering="crispEdges"/>
<line x1="952" y1="140" x2="975" y2="140" stroke="#004000" stroke-width="2" stroke-linecap="butt" shape-rendering="crispEdges"/>
<line x1="956.5" y1="145.5" x2="970" y2="145.5" stroke="#004000" stroke-width="2" stroke-linecap="butt" shape-rendering="crispEdges"/>
<line x1="960.5" y1="151" x2="965.5" y2="151" stroke="#004000" stroke-width="2" stroke-linecap="butt" shape-rendering="crispEdges"/>
<text transform="translate(550.7,166) scale(0.925,1)" font-size="9.7" fill="#141414" text-anchor="start" font-weight="normal" stroke="#141414" stroke-width="0.15">Manchester</text>
<path d="M604,158.6 L608.5,158.6 L613.6,162.3 L608.5,166 L604,166 Z" fill="none" stroke="#004000" stroke-width="1.8"/>
<polyline points="396,195 418,195" fill="none" stroke="#004000" stroke-width="2" stroke-linejoin="miter" stroke-linecap="square" shape-rendering="crispEdges"/>
<polyline points="396,217 418,217" fill="none" stroke="#004000" stroke-width="2" stroke-linejoin="miter" stroke-linecap="square" shape-rendering="crispEdges"/>
<line x1="418.2" y1="195" x2="449.81" y2="195" stroke="#800000" stroke-width="2" stroke-linecap="butt" shape-rendering="crispEdges"/>
<line x1="418.2" y1="217" x2="449.81" y2="217" stroke="#800000" stroke-width="2" stroke-linecap="butt" shape-rendering="crispEdges"/>
<path d="M440,183.9 L468.776,183.9 Q492.32,184.336 505.8,205.7 Q492.32,227.064 468.776,227.5 L440,227.5 L444,227.5 Q458.5,205.7 444,183.9 L440,183.9 Z" fill="#c8c8aa" stroke="#800000" stroke-width="2" stroke-linejoin="round"/>
<line x1="511.4" y1="206" x2="527.2" y2="206" stroke="#800000" stroke-width="2" stroke-linecap="butt" shape-rendering="crispEdges"/>
<circle cx="509.5" cy="206.3" r="2.4" fill="#e0e0d0" stroke="#800000" stroke-width="1.7"/>
<text x="440" y="180.9" font-size="13.3" fill="#141414" text-anchor="start" font-weight="normal">U3:D</text>
<text transform="translate(440,237.4) scale(0.925,1)" font-size="9.7" fill="#141414" text-anchor="start" font-weight="normal" stroke="#141414" stroke-width="0.15">74HC02</text>
<text transform="translate(440,248.1) scale(0.925,1)" font-size="9.7" fill="#141414" text-anchor="start" font-weight="normal" stroke="#141414" stroke-width="0.15">TDHLDQ=15n</text>
<text transform="translate(440,258.8) scale(0.925,1)" font-size="9.7" fill="#141414" text-anchor="start" font-weight="normal" stroke="#141414" stroke-width="0.15">TDLHDQ=15n</text>
<text transform="translate(420.5,193.8) scale(0.925,1)" font-size="9.7" fill="#141414" text-anchor="start" font-weight="normal" stroke="#141414" stroke-width="0.15">11</text>
<rect x="431" y="187" width="4" height="4" fill="#ff4848" shape-rendering="crispEdges"/>
<text transform="translate(420.5,215.8) scale(0.925,1)" font-size="9.7" fill="#141414" text-anchor="start" font-weight="normal" stroke="#141414" stroke-width="0.15">12</text>
<rect x="431" y="209" width="4" height="4" fill="#4040ff" shape-rendering="crispEdges"/>
<rect x="510" y="198" width="5" height="5" fill="#4040ff" shape-rendering="crispEdges"/>
<rect x="510" y="198" width="5" height="4" fill="#4040ff" shape-rendering="crispEdges"/>
<text transform="translate(516,204.8) scale(0.925,1)" font-size="9.7" fill="#141414" text-anchor="start" font-weight="normal" stroke="#141414" stroke-width="0.15">13</text>
<polyline points="527,206 527,195 538,195 538,206" fill="none" stroke="#004000" stroke-width="2" stroke-linejoin="miter" stroke-linecap="square" shape-rendering="crispEdges"/>
<polyline points="527,206 538,206" fill="none" stroke="#004000" stroke-width="2" stroke-linejoin="miter" stroke-linecap="square" shape-rendering="crispEdges"/>
<polyline points="527,206 527,238 473,238 473,228" fill="none" stroke="#004000" stroke-width="2" stroke-linejoin="miter" stroke-linecap="square" shape-rendering="crispEdges"/>
<polyline points="440,228 429,228 429,330" fill="none" stroke="#004000" stroke-width="2" stroke-linejoin="miter" stroke-linecap="square" shape-rendering="crispEdges"/>
<g stroke="#0000c8" stroke-width="1" fill="none"><circle cx="560.5" cy="282.5" r="3.6"/><path d="M555,282.5 H566 M560.5,277 V288"/></g>
<path d="M762,401.9 L778.8,401.9 L790.2,412.8 L778.8,423.7 L762,423.7 Z" fill="#c00000" stroke="#800000" stroke-width="1.6" stroke-linejoin="miter"/>
<text x="772.8" y="418.4" font-size="15.8" fill="#d6d6d6" text-anchor="middle" font-weight="bold">1</text>
<line x1="790" y1="413" x2="810.6" y2="413" stroke="#800000" stroke-width="2" stroke-linecap="butt" shape-rendering="crispEdges"/>
<circle cx="789.6" cy="402.4" r="3.4" fill="#ff0000" stroke="#b00000" stroke-width="1.2"/>
<path d="M789.6,399.8 V405 M788.0,401.4 L789.6,399.6 L791.2,401.4 M788.0,403.4 L789.6,405.2 L791.2,403.4" stroke="#300000" stroke-width="0.9" fill="none"/>
<rect x="797" y="405" width="6" height="5" fill="#ff4848" shape-rendering="crispEdges"/>
<path d="M762,423.7 L778.8,423.7 L790.2,434.6 L778.8,445.5 L762,445.5 Z" fill="#0000c0" stroke="#000080" stroke-width="1.6" stroke-linejoin="miter"/>
<text x="772.8" y="440.2" font-size="15.8" fill="#d6d6d6" text-anchor="middle" font-weight="bold">0</text>
<line x1="790" y1="435" x2="810.6" y2="435" stroke="#800000" stroke-width="2" stroke-linecap="butt" shape-rendering="crispEdges"/>
<circle cx="789.6" cy="424.2" r="3.4" fill="#ff0000" stroke="#b00000" stroke-width="1.2"/>
<path d="M789.6,421.6 V426.8 M788.0,423.2 L789.6,421.4 L791.2,423.2 M788.0,425.2 L789.6,427 L791.2,425.2" stroke="#300000" stroke-width="0.9" fill="none"/>
<rect x="797" y="427" width="6" height="5" fill="#4040ff" shape-rendering="crispEdges"/>
<path d="M762,445.5 L778.8,445.5 L790.2,456.4 L778.8,467.3 L762,467.3 Z" fill="#c00000" stroke="#800000" stroke-width="1.6" stroke-linejoin="miter"/>
<text x="772.8" y="462" font-size="15.8" fill="#d6d6d6" text-anchor="middle" font-weight="bold">1</text>
<line x1="790" y1="456" x2="810.6" y2="456" stroke="#800000" stroke-width="2" stroke-linecap="butt" shape-rendering="crispEdges"/>
<circle cx="789.6" cy="446" r="3.4" fill="#ff0000" stroke="#b00000" stroke-width="1.2"/>
<path d="M789.6,443.4 V448.6 M788.0,445 L789.6,443.2 L791.2,445 M788.0,447 L789.6,448.8 L791.2,447" stroke="#300000" stroke-width="0.9" fill="none"/>
<rect x="797" y="448" width="6" height="5" fill="#ff4848" shape-rendering="crispEdges"/>
<path d="M762,467.3 L778.8,467.3 L790.2,478.2 L778.8,489.1 L762,489.1 Z" fill="#c00000" stroke="#800000" stroke-width="1.6" stroke-linejoin="miter"/>
<text x="772.8" y="483.8" font-size="15.8" fill="#d6d6d6" text-anchor="middle" font-weight="bold">1</text>
<line x1="790" y1="478" x2="810.6" y2="478" stroke="#800000" stroke-width="2" stroke-linecap="butt" shape-rendering="crispEdges"/>
<circle cx="789.6" cy="467.8" r="3.4" fill="#ff0000" stroke="#b00000" stroke-width="1.2"/>
<path d="M789.6,465.2 V470.4 M788.0,466.8 L789.6,465 L791.2,466.8 M788.0,468.8 L789.6,470.6 L791.2,468.8" stroke="#300000" stroke-width="0.9" fill="none"/>
<rect x="797" y="470" width="6" height="5" fill="#ff4848" shape-rendering="crispEdges"/>
<path d="M762,489.1 L778.8,489.1 L790.2,500 L778.8,510.9 L762,510.9 Z" fill="#0000c0" stroke="#000080" stroke-width="1.6" stroke-linejoin="miter"/>
<text x="772.8" y="505.6" font-size="15.8" fill="#d6d6d6" text-anchor="middle" font-weight="bold">0</text>
<line x1="790" y1="500" x2="810.6" y2="500" stroke="#800000" stroke-width="2" stroke-linecap="butt" shape-rendering="crispEdges"/>
<circle cx="789.6" cy="489.6" r="3.4" fill="#ff0000" stroke="#b00000" stroke-width="1.2"/>
<path d="M789.6,487 V492.2 M788.0,488.6 L789.6,486.8 L791.2,488.6 M788.0,490.6 L789.6,492.4 L791.2,490.6" stroke="#300000" stroke-width="0.9" fill="none"/>
<rect x="797" y="492" width="6" height="5" fill="#4040ff" shape-rendering="crispEdges"/>
<path d="M762,510.9 L778.8,510.9 L790.2,521.8 L778.8,532.7 L762,532.7 Z" fill="#0000c0" stroke="#000080" stroke-width="1.6" stroke-linejoin="miter"/>
<text x="772.8" y="527.4" font-size="15.8" fill="#d6d6d6" text-anchor="middle" font-weight="bold">0</text>
<line x1="790" y1="522" x2="810.6" y2="522" stroke="#800000" stroke-width="2" stroke-linecap="butt" shape-rendering="crispEdges"/>
<circle cx="789.6" cy="511.4" r="3.4" fill="#ff0000" stroke="#b00000" stroke-width="1.2"/>
<path d="M789.6,508.8 V514 M788.0,510.4 L789.6,508.6 L791.2,510.4 M788.0,512.4 L789.6,514.2 L791.2,512.4" stroke="#300000" stroke-width="0.9" fill="none"/>
<rect x="797" y="514" width="6" height="5" fill="#4040ff" shape-rendering="crispEdges"/>
<path d="M762,532.7 L778.8,532.7 L790.2,543.6 L778.8,554.5 L762,554.5 Z" fill="#c00000" stroke="#800000" stroke-width="1.6" stroke-linejoin="miter"/>
<text x="772.8" y="549.2" font-size="15.8" fill="#d6d6d6" text-anchor="middle" font-weight="bold">1</text>
<line x1="790" y1="544" x2="810.6" y2="544" stroke="#800000" stroke-width="2" stroke-linecap="butt" shape-rendering="crispEdges"/>
<circle cx="789.6" cy="533.2" r="3.4" fill="#ff0000" stroke="#b00000" stroke-width="1.2"/>
<path d="M789.6,530.6 V535.8 M788.0,532.2 L789.6,530.4 L791.2,532.2 M788.0,534.2 L789.6,536 L791.2,534.2" stroke="#300000" stroke-width="0.9" fill="none"/>
<rect x="797" y="536" width="6" height="5" fill="#ff4848" shape-rendering="crispEdges"/>
<path d="M762,554.5 L778.8,554.5 L790.2,565.4 L778.8,576.3 L762,576.3 Z" fill="#0000c0" stroke="#000080" stroke-width="1.6" stroke-linejoin="miter"/>
<text x="772.8" y="571" font-size="15.8" fill="#d6d6d6" text-anchor="middle" font-weight="bold">0</text>
<line x1="790" y1="565" x2="810.6" y2="565" stroke="#800000" stroke-width="2" stroke-linecap="butt" shape-rendering="crispEdges"/>
<circle cx="789.6" cy="555" r="3.4" fill="#ff0000" stroke="#b00000" stroke-width="1.2"/>
<path d="M789.6,552.4 V557.6 M788.0,554 L789.6,552.2 L791.2,554 M788.0,556 L789.6,557.8 L791.2,556" stroke="#300000" stroke-width="0.9" fill="none"/>
<rect x="797" y="557" width="6" height="5" fill="#4040ff" shape-rendering="crispEdges"/>
<path d="M762,587.2 L778.8,587.2 L790.2,598.1 L778.8,609 L762,609 Z" fill="#c00000" stroke="#800000" stroke-width="1.6" stroke-linejoin="miter"/>
<text x="772.8" y="603.7" font-size="15.8" fill="#d6d6d6" text-anchor="middle" font-weight="bold">1</text>
<line x1="790" y1="598" x2="810.6" y2="598" stroke="#800000" stroke-width="2" stroke-linecap="butt" shape-rendering="crispEdges"/>
<circle cx="789.6" cy="587.7" r="3.4" fill="#ff0000" stroke="#b00000" stroke-width="1.2"/>
<path d="M789.6,585.1 V590.3 M788.0,586.7 L789.6,584.9 L791.2,586.7 M788.0,588.7 L789.6,590.5 L791.2,588.7" stroke="#300000" stroke-width="0.9" fill="none"/>
<rect x="797" y="590" width="6" height="5" fill="#ff4848" shape-rendering="crispEdges"/>
<path d="M762,609 L778.8,609 L790.2,619.9 L778.8,630.8 L762,630.8 Z" fill="#c00000" stroke="#800000" stroke-width="1.6" stroke-linejoin="miter"/>
<text x="772.8" y="625.5" font-size="15.8" fill="#d6d6d6" text-anchor="middle" font-weight="bold">1</text>
<line x1="790" y1="620" x2="810.6" y2="620" stroke="#800000" stroke-width="2" stroke-linecap="butt" shape-rendering="crispEdges"/>
<circle cx="789.6" cy="609.5" r="3.4" fill="#ff0000" stroke="#b00000" stroke-width="1.2"/>
<path d="M789.6,606.9 V612.1 M788.0,608.5 L789.6,606.7 L791.2,608.5 M788.0,610.5 L789.6,612.3 L791.2,610.5" stroke="#300000" stroke-width="0.9" fill="none"/>
<rect x="797" y="612" width="6" height="5" fill="#ff4848" shape-rendering="crispEdges"/>
<polyline points="811,413 832,413 832,446 898,446" fill="none" stroke="#004000" stroke-width="2" stroke-linejoin="miter" stroke-linecap="square" shape-rendering="crispEdges"/>
<polyline points="811,435 822,435 822,456 898,456" fill="none" stroke="#004000" stroke-width="2" stroke-linejoin="miter" stroke-linecap="square" shape-rendering="crispEdges"/>
<polyline points="811,456 811,467 898,467" fill="none" stroke="#004000" stroke-width="2" stroke-linejoin="miter" stroke-linecap="square" shape-rendering="crispEdges"/>
<polyline points="811,478 898,478" fill="none" stroke="#004000" stroke-width="2" stroke-linejoin="miter" stroke-linecap="square" shape-rendering="crispEdges"/>
<polyline points="811,500 811,489 898,489" fill="none" stroke="#004000" stroke-width="2" stroke-linejoin="miter" stroke-linecap="square" shape-rendering="crispEdges"/>
<polyline points="811,522 822,522 822,500 898,500" fill="none" stroke="#004000" stroke-width="2" stroke-linejoin="miter" stroke-linecap="square" shape-rendering="crispEdges"/>
<polyline points="811,544 832,544 832,511 898,511" fill="none" stroke="#004000" stroke-width="2" stroke-linejoin="miter" stroke-linecap="square" shape-rendering="crispEdges"/>
<polyline points="811,565 843,565 843,522 898,522" fill="none" stroke="#004000" stroke-width="2" stroke-linejoin="miter" stroke-linecap="square" shape-rendering="crispEdges"/>
<polyline points="811,598 854,598 854,544 898,544" fill="none" stroke="#004000" stroke-width="2" stroke-linejoin="miter" stroke-linecap="square" shape-rendering="crispEdges"/>
<polyline points="811,620 865,620 865,565 898,565" fill="none" stroke="#004000" stroke-width="2" stroke-linejoin="miter" stroke-linecap="square" shape-rendering="crispEdges"/>
<polyline points="832,598 832,631 630,631" fill="none" stroke="#004000" stroke-width="2" stroke-linejoin="miter" stroke-linecap="square" shape-rendering="crispEdges"/>
<polyline points="876,424 898,424" fill="none" stroke="#004000" stroke-width="2" stroke-linejoin="miter" stroke-linecap="square" shape-rendering="crispEdges"/>
<text transform="translate(827.5,410.6) scale(0.925,1)" font-size="9.7" fill="#0000c0" text-anchor="start" font-weight="normal" stroke="#0000c0" stroke-width="0.15">20MHz</text>
<path d="M865,407 L860.3,413.6 L869.6,417.6 Z M867.4,415.6 L875.8,424" fill="none" stroke="#0000c0" stroke-width="1"/>
<path d="M875.8,419.5 H878.3 L880.8,408.5 H891.7 L894.2,419.5 H897.5" fill="none" stroke="#0000c0" stroke-width="1"/>
<text transform="translate(909.5,576) scale(0.925,1)" font-size="9.7" fill="#303030" text-anchor="start" font-weight="normal" stroke="#303030" stroke-width="0.15">CCT001</text>
<rect x="909.4" y="413.5" width="54" height="162.5" fill="#c8c8aa" stroke="#000080" stroke-width="3"/>
<text transform="translate(909.5,576) scale(0.925,1)" font-size="9.7" fill="#303030" text-anchor="start" font-weight="normal" stroke="#303030" stroke-width="0.15" opacity="0.8">CCT001</text>
<text x="908" y="408.7" font-size="13.3" fill="#141414" text-anchor="start" font-weight="normal">SENDER</text>
<rect x="897.8" y="419.4" width="11" height="9" fill="none" stroke="#004000" stroke-width="1.9"/>
<path d="M910.4,420 L920.1,423.9 L910.4,427.8 Z" fill="none" stroke="#004000" stroke-width="1.7"/>
<text transform="translate(925.5,427.4) scale(0.925,1)" font-size="9.7" fill="#141414" text-anchor="start" font-weight="normal" stroke="#141414" stroke-width="0.15">2CLC</text>
<rect x="897.8" y="441.2" width="11" height="9" fill="none" stroke="#004000" stroke-width="1.9"/>
<path d="M910.4,441.8 L920.1,445.7 L910.4,449.6 Z" fill="none" stroke="#004000" stroke-width="1.7"/>
<text transform="translate(925.5,449.2) scale(0.925,1)" font-size="9.7" fill="#141414" text-anchor="start" font-weight="normal" stroke="#141414" stroke-width="0.15">IN0</text>
<rect x="897.8" y="452.1" width="11" height="9" fill="none" stroke="#004000" stroke-width="1.9"/>
<path d="M910.4,452.7 L920.1,456.6 L910.4,460.5 Z" fill="none" stroke="#004000" stroke-width="1.7"/>
<text transform="translate(925.5,460.1) scale(0.925,1)" font-size="9.7" fill="#141414" text-anchor="start" font-weight="normal" stroke="#141414" stroke-width="0.15">IN1</text>
<rect x="897.8" y="463" width="11" height="9" fill="none" stroke="#004000" stroke-width="1.9"/>
<path d="M910.4,463.6 L920.1,467.5 L910.4,471.4 Z" fill="none" stroke="#004000" stroke-width="1.7"/>
<text transform="translate(925.5,471) scale(0.925,1)" font-size="9.7" fill="#141414" text-anchor="start" font-weight="normal" stroke="#141414" stroke-width="0.15">IN2</text>
<rect x="897.8" y="473.9" width="11" height="9" fill="none" stroke="#004000" stroke-width="1.9"/>
<path d="M910.4,474.5 L920.1,478.4 L910.4,482.3 Z" fill="none" stroke="#004000" stroke-width="1.7"/>
<text transform="translate(925.5,481.9) scale(0.925,1)" font-size="9.7" fill="#141414" text-anchor="start" font-weight="normal" stroke="#141414" stroke-width="0.15">IN3</text>
<rect x="897.8" y="484.8" width="11" height="9" fill="none" stroke="#004000" stroke-width="1.9"/>
<path d="M910.4,485.4 L920.1,489.3 L910.4,493.2 Z" fill="none" stroke="#004000" stroke-width="1.7"/>
<text transform="translate(925.5,492.8) scale(0.925,1)" font-size="9.7" fill="#141414" text-anchor="start" font-weight="normal" stroke="#141414" stroke-width="0.15">IN4</text>
<rect x="897.8" y="495.7" width="11" height="9" fill="none" stroke="#004000" stroke-width="1.9"/>
<path d="M910.4,496.3 L920.1,500.2 L910.4,504.1 Z" fill="none" stroke="#004000" stroke-width="1.7"/>
<text transform="translate(925.5,503.7) scale(0.925,1)" font-size="9.7" fill="#141414" text-anchor="start" font-weight="normal" stroke="#141414" stroke-width="0.15">IN5</text>
<rect x="897.8" y="506.6" width="11" height="9" fill="none" stroke="#004000" stroke-width="1.9"/>
<path d="M910.4,507.2 L920.1,511.1 L910.4,515 Z" fill="none" stroke="#004000" stroke-width="1.7"/>
<text transform="translate(925.5,514.6) scale(0.925,1)" font-size="9.7" fill="#141414" text-anchor="start" font-weight="normal" stroke="#141414" stroke-width="0.15">IN6</text>
<rect x="897.8" y="517.5" width="11" height="9" fill="none" stroke="#004000" stroke-width="1.9"/>
<path d="M910.4,518.1 L920.1,522 L910.4,525.9 Z" fill="none" stroke="#004000" stroke-width="1.7"/>
<text transform="translate(925.5,525.5) scale(0.925,1)" font-size="9.7" fill="#141414" text-anchor="start" font-weight="normal" stroke="#141414" stroke-width="0.15">IN7</text>
<rect x="897.8" y="539.3" width="11" height="9" fill="none" stroke="#004000" stroke-width="1.9"/>
<path d="M910.4,539.9 L920.1,543.8 L910.4,547.7 Z" fill="none" stroke="#004000" stroke-width="1.7"/>
<text transform="translate(925.5,547.3) scale(0.925,1)" font-size="9.7" fill="#141414" text-anchor="start" font-weight="normal" stroke="#141414" stroke-width="0.15">SEND</text>
<rect x="897.8" y="561.1" width="11" height="9" fill="none" stroke="#004000" stroke-width="1.9"/>
<path d="M910.4,561.7 L920.1,565.6 L910.4,569.5 Z" fill="none" stroke="#004000" stroke-width="1.7"/>
<text transform="translate(925.5,569.1) scale(0.925,1)" font-size="9.7" fill="#141414" text-anchor="start" font-weight="normal" stroke="#141414" stroke-width="0.15">NoDB</text>
<rect x="951.8" y="528.4" width="11" height="9" fill="none" stroke="#004000" stroke-width="1.9"/>
<path d="M964.4,529 L974.1,532.9 L964.4,536.8 Z" fill="none" stroke="#004000" stroke-width="1.7"/>
<text transform="translate(946.7,536.5) scale(0.925,1)" font-size="9.7" fill="#141414" text-anchor="end" font-weight="normal" stroke="#141414" stroke-width="0.15">OUT</text>
<polyline points="973,533 985,533" fill="none" stroke="#004000" stroke-width="2" stroke-linejoin="miter" stroke-linecap="square" shape-rendering="crispEdges"/>
<path d="M985,528.7 L989.5,528.7 L996.2,532.9 L989.5,537.1 L985,537.1 Z" fill="none" stroke="#004000" stroke-width="1.8"/>
<text transform="translate(1001.3,536.6) scale(0.925,1)" font-size="9.7" fill="#141414" text-anchor="start" font-weight="normal" stroke="#141414" stroke-width="0.15">MANCHESTER</text>
<rect x="13" y="116" width="5" height="5" fill="#004000" shape-rendering="crispEdges"/>
<rect x="111" y="127" width="5" height="5" fill="#004000" shape-rendering="crispEdges"/>
<rect x="209" y="138" width="5" height="5" fill="#004000" shape-rendering="crispEdges"/>
<rect x="296" y="62" width="5" height="5" fill="#004000" shape-rendering="crispEdges"/>
<rect x="307" y="127" width="5" height="5" fill="#004000" shape-rendering="crispEdges"/>
<rect x="394" y="18" width="5" height="5" fill="#004000" shape-rendering="crispEdges"/>
<rect x="394" y="73" width="5" height="5" fill="#004000" shape-rendering="crispEdges"/>
<rect x="394" y="95" width="5" height="5" fill="#004000" shape-rendering="crispEdges"/>
<rect x="394" y="160" width="5" height="5" fill="#004000" shape-rendering="crispEdges"/>
<rect x="492" y="20" width="5" height="5" fill="#004000" shape-rendering="crispEdges"/>
<rect x="689" y="20" width="5" height="5" fill="#004000" shape-rendering="crispEdges"/>
<rect x="340" y="193" width="5" height="5" fill="#004000" shape-rendering="crispEdges"/>
<rect x="394" y="193" width="5" height="5" fill="#004000" shape-rendering="crispEdges"/>
<rect x="394" y="215" width="5" height="5" fill="#004000" shape-rendering="crispEdges"/>
<rect x="394" y="160" width="5" height="5" fill="#004000" shape-rendering="crispEdges"/>
<rect x="394" y="193" width="5" height="5" fill="#004000" shape-rendering="crispEdges"/>
<rect x="492" y="84" width="5" height="5" fill="#004000" shape-rendering="crispEdges"/>
<rect x="928" y="40" width="5" height="5" fill="#004000" shape-rendering="crispEdges"/>
<rect x="536" y="204" width="5" height="5" fill="#004000" shape-rendering="crispEdges"/>
<rect x="830" y="596" width="5" height="5" fill="#004000" shape-rendering="crispEdges"/>
<defs><linearGradient id="tb" x1="0" y1="0" x2="1" y2="0"><stop offset="0" stop-color="#e4ecf6"/><stop offset="0.15" stop-color="#c6d8eb"/><stop offset="0.45" stop-color="#a4c1df"/><stop offset="0.72" stop-color="#a9c5e2"/><stop offset="1" stop-color="#c4d7eb"/></linearGradient><linearGradient id="tbv" x1="0" y1="0" x2="0" y2="1"><stop offset="0" stop-color="#ffffff" stop-opacity="0.35"/><stop offset="0.5" stop-color="#ffffff" stop-opacity="0.04"/><stop offset="1" stop-color="#ffffff" stop-opacity="0"/></linearGradient><linearGradient id="cl" x1="0" y1="0" x2="0" y2="1"><stop offset="0" stop-color="#e9a99a"/><stop offset="0.45" stop-color="#d9715a"/><stop offset="0.5" stop-color="#c5401f"/><stop offset="1" stop-color="#df8052"/></linearGradient><linearGradient id="cyl" x1="0" y1="0" x2="1" y2="0"><stop offset="0" stop-color="#3c3c3c"/><stop offset="0.2" stop-color="#9a9a9a"/><stop offset="0.5" stop-color="#ffffff"/><stop offset="0.8" stop-color="#9a9a9a"/><stop offset="1" stop-color="#3c3c3c"/></linearGradient><radialGradient id="capb" cx="0.4" cy="0.3" r="0.75"><stop offset="0" stop-color="#a8a8a8"/><stop offset="0.5" stop-color="#686868"/><stop offset="1" stop-color="#2c2c2c"/></radialGradient><radialGradient id="curb" cx="0.4" cy="0.3" r="0.8"><stop offset="0" stop-color="#ffffff"/><stop offset="0.5" stop-color="#fbd8dc"/><stop offset="1" stop-color="#f2a4ae"/></radialGradient><linearGradient id="knob" x1="0" y1="0" x2="1" y2="1"><stop offset="0" stop-color="#8a8a8a"/><stop offset="0.35" stop-color="#d8d8d8"/><stop offset="0.7" stop-color="#7a7a7a"/><stop offset="1" stop-color="#3a3a3a"/></linearGradient><linearGradient id="knob2" x1="0" y1="0" x2="1" y2="0.6"><stop offset="0" stop-color="#8c8c8c"/><stop offset="0.3" stop-color="#c8c8c8"/><stop offset="0.5" stop-color="#ffffff"/><stop offset="0.7" stop-color="#b0b0b0"/><stop offset="1" stop-color="#707070"/></linearGradient><linearGradient id="shr" x1="0" y1="0" x2="1" y2="0"><stop offset="0" stop-color="#000" stop-opacity="0.70"/><stop offset="0.2" stop-color="#000" stop-opacity="0.48"/><stop offset="0.5" stop-color="#000" stop-opacity="0.20"/><stop offset="0.8" stop-color="#000" stop-opacity="0.05"/><stop offset="1" stop-color="#000" stop-opacity="0"/></linearGradient><linearGradient id="shl" x1="1" y1="0" x2="0" y2="0"><stop offset="0" stop-color="#000" stop-opacity="0.36"/><stop offset="0.4" stop-color="#000" stop-opacity="0.14"/><stop offset="1" stop-color="#000" stop-opacity="0"/></linearGradient><linearGradient id="sht" x1="0" y1="1" x2="0" y2="0"><stop offset="0" stop-color="#000" stop-opacity="0.25"/><stop offset="1" stop-color="#000" stop-opacity="0"/></linearGradient></defs>
<filter id="blur5" filterUnits="userSpaceOnUse" x="-20" y="290" width="700" height="400"><feGaussianBlur stdDeviation="5"/></filter>
<rect x="14.4" y="328" width="621.6" height="340" fill="#000" opacity="0.9" filter="url(#blur5)"/>
<rect x="13" y="324" width="620" height="330" fill="url(#tb)" shape-rendering="crispEdges"/>
<rect x="13" y="324" width="620" height="24" fill="url(#tbv)" shape-rendering="crispEdges"/>
<rect x="13.5" y="324.5" width="619" height="330" fill="none" stroke="#2e3a48" stroke-width="1"/>
<rect x="14.5" y="325.5" width="617" height="330" fill="none" stroke="#f2f7fc" stroke-width="1" opacity="0.9"/>
<rect x="423" y="326" width="13" height="21" fill="#203828" opacity="0.10"/>
<rect x="425" y="326" width="9" height="21" fill="#203828" opacity="0.10"/>
<rect x="427" y="326" width="5" height="21" fill="#203828" opacity="0.12"/>
<text x="21" y="340.4" font-size="11.7" fill="#101010" text-anchor="start" font-weight="normal">VSM Logic Analyser</text>
<rect x="610.5" y="329.5" width="16" height="15.5" rx="2.2" fill="url(#cl)" stroke="#8a4a40" stroke-width="1"/>
<rect x="611.5" y="330.5" width="14" height="13.5" rx="1.6" fill="none" stroke="#f3c8bc" stroke-width="1" opacity="0.8"/>
<path d="M616.5,335.4 L620.4,339.2 M620.4,335.4 L616.5,339.2" stroke="#4a4a5a" stroke-width="3.2" stroke-linecap="square"/>
<path d="M616.5,335.4 L620.4,339.2 M620.4,335.4 L616.5,339.2" stroke="#ffffff" stroke-width="1.7" stroke-linecap="square"/>
<rect x="15" y="348" width="3" height="300" fill="#9fbbda" shape-rendering="crispEdges"/>
<rect x="628" y="348" width="3" height="300" fill="#aac8e1" shape-rendering="crispEdges"/>
<rect x="14" y="348" width="1" height="300" fill="#f8fbfe" shape-rendering="crispEdges"/>
<rect x="631" y="348" width="1" height="300" fill="#f8fbfe" shape-rendering="crispEdges"/>
<rect x="18" y="347" width="610" height="300" fill="#fdfdfd" shape-rendering="crispEdges"/>
<rect x="19" y="348" width="608" height="300" fill="#000000" shape-rendering="crispEdges"/>
<rect x="20" y="349" width="606" height="300" fill="#fdfdfd" shape-rendering="crispEdges"/>
<rect x="22" y="351" width="81" height="300" fill="#b2b2b2" shape-rendering="crispEdges"/>
<rect x="104" y="351" width="1" height="300" fill="#fdfdfd" shape-rendering="crispEdges"/>
<rect x="105" y="351" width="18" height="300" fill="#b2b2b2" shape-rendering="crispEdges"/>
<rect x="533" y="351" width="91" height="300" fill="#a8a8a8" shape-rendering="crispEdges"/>
<rect x="624" y="351" width="1" height="300" fill="#000000" shape-rendering="crispEdges"/>
<rect x="124" y="351" width="2" height="300" fill="#f0f0f0" shape-rendering="crispEdges"/>
<rect x="126" y="351" width="406" height="300" fill="#000000" shape-rendering="crispEdges"/>
<rect x="127" y="352" width="403" height="300" fill="#c0c0c0" shape-rendering="crispEdges"/>
<rect x="529" y="352" width="2" height="300" fill="#ececec" shape-rendering="crispEdges"/>
<rect x="532" y="351" width="1" height="300" fill="#f6f6f6" shape-rendering="crispEdges"/>
<rect x="128" y="353" width="401" height="300" fill="#000000" shape-rendering="crispEdges"/>
<path d="M128,366.5 H529 M128,386.5 H529 M128,406.5 H529 M128,426.5 H529 M128,446.5 H529 M128,466.5 H529 M128,486.5 H529 M128,506.5 H529 M128,526.5 H529 M128,546.5 H529 M128,566.5 H529 M128,586.5 H529 M128,606.5 H529 M128,626.5 H529 M148.5,366 V644 M168.5,366 V644 M188.5,366 V644 M208.5,366 V644 M228.5,366 V644 M248.5,366 V644 M268.5,366 V644 M288.5,366 V644 M308.5,366 V644 M328.5,366 V644 M348.5,366 V644 M368.5,366 V644 M388.5,366 V644 M408.5,366 V644 M428.5,366 V644 M448.5,366 V644 M468.5,366 V644 M488.5,366 V644 M508.5,366 V644" stroke="#004e06" stroke-width="1" fill="none" shape-rendering="crispEdges"/>
<g fill="#006410"><rect x="148" y="366" width="1" height="1"/><rect x="168" y="366" width="1" height="1"/><rect x="188" y="366" width="1" height="1"/><rect x="208" y="366" width="1" height="1"/><rect x="228" y="366" width="1" height="1"/><rect x="248" y="366" width="1" height="1"/><rect x="268" y="366" width="1" height="1"/><rect x="288" y="366" width="1" height="1"/><rect x="308" y="366" width="1" height="1"/><rect x="328" y="366" width="1" height="1"/><rect x="348" y="366" width="1" height="1"/><rect x="368" y="366" width="1" height="1"/><rect x="388" y="366" width="1" height="1"/><rect x="408" y="366" width="1" height="1"/><rect x="428" y="366" width="1" height="1"/><rect x="448" y="366" width="1" height="1"/><rect x="468" y="366" width="1" height="1"/><rect x="488" y="366" width="1" height="1"/><rect x="508" y="366" width="1" height="1"/><rect x="148" y="386" width="1" height="1"/><rect x="168" y="386" width="1" height="1"/><rect x="188" y="386" width="1" height="1"/><rect x="208" y="386" width="1" height="1"/><rect x="228" y="386" width="1" height="1"/><rect x="248" y="386" width="1" height="1"/><rect x="268" y="386" width="1" height="1"/><rect x="288" y="386" width="1" height="1"/><rect x="308" y="386" width="1" height="1"/><rect x="328" y="386" width="1" height="1"/><rect x="348" y="386" width="1" height="1"/><rect x="368" y="386" width="1" height="1"/><rect x="388" y="386" width="1" height="1"/><rect x="408" y="386" width="1" height="1"/><rect x="428" y="386" width="1" height="1"/><rect x="448" y="386" width="1" height="1"/><rect x="468" y="386" width="1" height="1"/><rect x="488" y="386" width="1" height="1"/><rect x="508" y="386" width="1" height="1"/><rect x="148" y="406" width="1" height="1"/><rect x="168" y="406" width="1" height="1"/><rect x="188" y="406" width="1" height="1"/><rect x="208" y="406" width="1" height="1"/><rect x="228" y="406" width="1" height="1"/><rect x="248" y="406" width="1" height="1"/><rect x="268" y="406" width="1" height="1"/><rect x="288" y="406" width="1" height="1"/><rect x="308" y="406" width="1" height="1"/><rect x="328" y="406" width="1" height="1"/><rect x="348" y="406" width="1" height="1"/><rect x="368" y="406" width="1" height="1"/><rect x="388" y="406" width="1" height="1"/><rect x="408" y="406" width="1" height="1"/><rect x="428" y="406" width="1" height="1"/><rect x="448" y="406" width="1" height="1"/><rect x="468" y="406" width="1" height="1"/><rect x="488" y="406" width="1" height="1"/><rect x="508" y="406" width="1" height="1"/><rect x="148" y="426" width="1" height="1"/><rect x="168" y="426" width="1" height="1"/><rect x="188" y="426" width="1" height="1"/><rect x="208" y="426" width="1" height="1"/><rect x="228" y="426" width="1" height="1"/><rect x="248" y="426" width="1" height="1"/><rect x="268" y="426" width="1" height="1"/><rect x="288" y="426" width="1" height="1"/><rect x="308" y="426" width="1" height="1"/><rect x="328" y="426" width="1" height="1"/><rect x="348" y="426" width="1" height="1"/><rect x="368" y="426" width="1" height="1"/><rect x="388" y="426" width="1" height="1"/><rect x="408" y="426" width="1" height="1"/><rect x="428" y="426" width="1" height="1"/><rect x="448" y="426" width="1" height="1"/><rect x="468" y="426" width="1" height="1"/><rect x="488" y="426" width="1" height="1"/><rect x="508" y="426" width="1" height="1"/><rect x="148" y="446" width="1" height="1"/><rect x="168" y="446" width="1" height="1"/><rect x="188" y="446" width="1" height="1"/><rect x="208" y="446" width="1" height="1"/><rect x="228" y="446" width="1" height="1"/><rect x="248" y="446" width="1" height="1"/><rect x="268" y="446" width="1" height="1"/><rect x="288" y="446" width="1" height="1"/><rect x="308" y="446" width="1" height="1"/><rect x="328" y="446" width="1" height="1"/><rect x="348" y="446" width="1" height="1"/><rect x="368" y="446" width="1" height="1"/><rect x="388" y="446" width="1" height="1"/><rect x="408" y="446" width="1" height="1"/><rect x="428" y="446" width="1" height="1"/><rect x="448" y="446" width="1" height="1"/><rect x="468" y="446" width="1" height="1"/><rect x="488" y="446" width="1" height="1"/><rect x="508" y="446" width="1" height="1"/><rect x="148" y="466" width="1" height="1"/><rect x="168" y="466" width="1" height="1"/><rect x="188" y="466" width="1" height="1"/><rect x="208" y="466" width="1" height="1"/><rect x="228" y="466" width="1" height="1"/><rect x="248" y="466" width="1" height="1"/><rect x="268" y="466" width="1" height="1"/><rect x="288" y="466" width="1" height="1"/><rect x="308" y="466" width="1" height="1"/><rect x="328" y="466" width="1" height="1"/><rect x="348" y="466" width="1" height="1"/><rect x="368" y="466" width="1" height="1"/><rect x="388" y="466" width="1" height="1"/><rect x="408" y="466" width="1" height="1"/><rect x="428" y="466" width="1" height="1"/><rect x="448" y="466" width="1" height="1"/><rect x="468" y="466" width="1" height="1"/><rect x="488" y="466" width="1" height="1"/><rect x="508" y="466" width="1" height="1"/><rect x="148" y="486" width="1" height="1"/><rect x="168" y="486" width="1" height="1"/><rect x="188" y="486" width="1" height="1"/><rect x="208" y="486" width="1" height="1"/><rect x="228" y="486" width="1" height="1"/><rect x="248" y="486" width="1" height="1"/><rect x="268" y="486" width="1" height="1"/><rect x="288" y="486" width="1" height="1"/><rect x="308" y="486" width="1" height="1"/><rect x="328" y="486" width="1" height="1"/><rect x="348" y="486" width="1" height="1"/><rect x="368" y="486" width="1" height="1"/><rect x="388" y="486" width="1" height="1"/><rect x="408" y="486" width="1" height="1"/><rect x="428" y="486" width="1" height="1"/><rect x="448" y="486" width="1" height="1"/><rect x="468" y="486" width="1" height="1"/><rect x="488" y="486" width="1" height="1"/><rect x="508" y="486" width="1" height="1"/><rect x="148" y="506" width="1" height="1"/><rect x="168" y="506" width="1" height="1"/><rect x="188" y="506" width="1" height="1"/><rect x="208" y="506" width="1" height="1"/><rect x="228" y="506" width="1" height="1"/><rect x="248" y="506" width="1" height="1"/><rect x="268" y="506" width="1" height="1"/><rect x="288" y="506" width="1" height="1"/><rect x="308" y="506" width="1" height="1"/><rect x="328" y="506" width="1" height="1"/><rect x="348" y="506" width="1" height="1"/><rect x="368" y="506" width="1" height="1"/><rect x="388" y="506" width="1" height="1"/><rect x="408" y="506" width="1" height="1"/><rect x="428" y="506" width="1" height="1"/><rect x="448" y="506" width="1" height="1"/><rect x="468" y="506" width="1" height="1"/><rect x="488" y="506" width="1" height="1"/><rect x="508" y="506" width="1" height="1"/><rect x="148" y="526" width="1" height="1"/><rect x="168" y="526" width="1" height="1"/><rect x="188" y="526" width="1" height="1"/><rect x="208" y="526" width="1" height="1"/><rect x="228" y="526" width="1" height="1"/><rect x="248" y="526" width="1" height="1"/><rect x="268" y="526" width="1" height="1"/><rect x="288" y="526" width="1" height="1"/><rect x="308" y="526" width="1" height="1"/><rect x="328" y="526" width="1" height="1"/><rect x="348" y="526" width="1" height="1"/><rect x="368" y="526" width="1" height="1"/><rect x="388" y="526" width="1" height="1"/><rect x="408" y="526" width="1" height="1"/><rect x="428" y="526" width="1" height="1"/><rect x="448" y="526" width="1" height="1"/><rect x="468" y="526" width="1" height="1"/><rect x="488" y="526" width="1" height="1"/><rect x="508" y="526" width="1" height="1"/><rect x="148" y="546" width="1" height="1"/><rect x="168" y="546" width="1" height="1"/><rect x="188" y="546" width="1" height="1"/><rect x="208" y="546" width="1" height="1"/><rect x="228" y="546" width="1" height="1"/><rect x="248" y="546" width="1" height="1"/><rect x="268" y="546" width="1" height="1"/><rect x="288" y="546" width="1" height="1"/><rect x="308" y="546" width="1" height="1"/><rect x="328" y="546" width="1" height="1"/><rect x="348" y="546" width="1" height="1"/><rect x="368" y="546" width="1" height="1"/><rect x="388" y="546" width="1" height="1"/><rect x="408" y="546" width="1" height="1"/><rect x="428" y="546" width="1" height="1"/><rect x="448" y="546" width="1" height="1"/><rect x="468" y="546" width="1" height="1"/><rect x="488" y="546" width="1" height="1"/><rect x="508" y="546" width="1" height="1"/><rect x="148" y="566" width="1" height="1"/><rect x="168" y="566" width="1" height="1"/><rect x="188" y="566" width="1" height="1"/><rect x="208" y="566" width="1" height="1"/><rect x="228" y="566" width="1" height="1"/><rect x="248" y="566" width="1" height="1"/><rect x="268" y="566" width="1" height="1"/><rect x="288" y="566" width="1" height="1"/><rect x="308" y="566" width="1" height="1"/><rect x="328" y="566" width="1" height="1"/><rect x="348" y="566" width="1" height="1"/><rect x="368" y="566" width="1" height="1"/><rect x="388" y="566" width="1" height="1"/><rect x="408" y="566" width="1" height="1"/><rect x="428" y="566" width="1" height="1"/><rect x="448" y="566" width="1" height="1"/><rect x="468" y="566" width="1" height="1"/><rect x="488" y="566" width="1" height="1"/><rect x="508" y="566" width="1" height="1"/><rect x="148" y="586" width="1" height="1"/><rect x="168" y="586" width="1" height="1"/><rect x="188" y="586" width="1" height="1"/><rect x="208" y="586" width="1" height="1"/><rect x="228" y="586" width="1" height="1"/><rect x="248" y="586" width="1" height="1"/><rect x="268" y="586" width="1" height="1"/><rect x="288" y="586" width="1" height="1"/><rect x="308" y="586" width="1" height="1"/><rect x="328" y="586" width="1" height="1"/><rect x="348" y="586" width="1" height="1"/><rect x="368" y="586" width="1" height="1"/><rect x="388" y="586" width="1" height="1"/><rect x="408" y="586" width="1" height="1"/><rect x="428" y="586" width="1" height="1"/><rect x="448" y="586" width="1" height="1"/><rect x="468" y="586" width="1" height="1"/><rect x="488" y="586" width="1" height="1"/><rect x="508" y="586" width="1" height="1"/><rect x="148" y="606" width="1" height="1"/><rect x="168" y="606" width="1" height="1"/><rect x="188" y="606" width="1" height="1"/><rect x="208" y="606" width="1" height="1"/><rect x="228" y="606" width="1" height="1"/><rect x="248" y="606" width="1" height="1"/><rect x="268" y="606" width="1" height="1"/><rect x="288" y="606" width="1" height="1"/><rect x="308" y="606" width="1" height="1"/><rect x="328" y="606" width="1" height="1"/><rect x="348" y="606" width="1" height="1"/><rect x="368" y="606" width="1" height="1"/><rect x="388" y="606" width="1" height="1"/><rect x="408" y="606" width="1" height="1"/><rect x="428" y="606" width="1" height="1"/><rect x="448" y="606" width="1" height="1"/><rect x="468" y="606" width="1" height="1"/><rect x="488" y="606" width="1" height="1"/><rect x="508" y="606" width="1" height="1"/><rect x="148" y="626" width="1" height="1"/><rect x="168" y="626" width="1" height="1"/><rect x="188" y="626" width="1" height="1"/><rect x="208" y="626" width="1" height="1"/><rect x="228" y="626" width="1" height="1"/><rect x="248" y="626" width="1" height="1"/><rect x="268" y="626" width="1" height="1"/><rect x="288" y="626" width="1" height="1"/><rect x="308" y="626" width="1" height="1"/><rect x="328" y="626" width="1" height="1"/><rect x="348" y="626" width="1" height="1"/><rect x="368" y="626" width="1" height="1"/><rect x="388" y="626" width="1" height="1"/><rect x="408" y="626" width="1" height="1"/><rect x="428" y="626" width="1" height="1"/><rect x="448" y="626" width="1" height="1"/><rect x="468" y="626" width="1" height="1"/><rect x="488" y="626" width="1" height="1"/><rect x="508" y="626" width="1" height="1"/></g>
<path d="M128,385.5 H168.5 V367.5 H529" stroke="#00a246" stroke-width="1" fill="none" shape-rendering="crispEdges"/>
<path d="M128,387.5 H204.5 V405.5 H284.5 V387.5 H364.5 V405.5 H404.5 V387.5 H444.5 V405.5 H524.5 V387.5 H529" stroke="#00a246" stroke-width="1" fill="none" shape-rendering="crispEdges"/>
<path d="M128,407.5 H220.5 V425.5 H240.5 V407.5 H296.5 V425.5 H320.5 V407.5 H376.5 V425.5 H400.5 V407.5 H416.5 V425.5 H440.5 V407.5 H456.5 V425.5 H480.5 V407.5 H529" stroke="#00a246" stroke-width="1" fill="none" shape-rendering="crispEdges"/>
<path d="M128,427.5 H276.5 V445.5 H288.5 V427.5 H356.5 V445.5 H368.5 V427.5 H516.5 V445.5 H528.5 V427.5 H529" stroke="#00a246" stroke-width="1" fill="none" shape-rendering="crispEdges"/>
<path d="M128,465.5 H236.5 V447.5 H529" stroke="#00a246" stroke-width="1" fill="none" shape-rendering="crispEdges"/>
<path d="M128,485.5 H529" stroke="#00a246" stroke-width="1" fill="none" shape-rendering="crispEdges"/>
<path d="M128,505.5 H529" stroke="#00a246" stroke-width="1" fill="none" shape-rendering="crispEdges"/>
<path d="M128,525.5 H529" stroke="#00a246" stroke-width="1" fill="none" shape-rendering="crispEdges"/>
<path d="M128,545.5 H529" stroke="#00a246" stroke-width="1" fill="none" shape-rendering="crispEdges"/>
<path d="M128,565.5 H529" stroke="#00a246" stroke-width="1" fill="none" shape-rendering="crispEdges"/>
<path d="M128,585.5 H529" stroke="#00a246" stroke-width="1" fill="none" shape-rendering="crispEdges"/>
<path d="M128,605.5 H529" stroke="#00a246" stroke-width="1" fill="none" shape-rendering="crispEdges"/>
<path d="M128,625.5 H529" stroke="#00a246" stroke-width="1" fill="none" shape-rendering="crispEdges"/>
<path d="M128,645.5 H529" stroke="#00a246" stroke-width="1" fill="none" shape-rendering="crispEdges"/>
<line x1="168.5" y1="367" x2="168.5" y2="644" stroke="#c8c8c8" stroke-width="1" stroke-dasharray="3,3" shape-rendering="crispEdges"/>
<rect x="240" y="353" width="1" height="300" fill="#9c9c9c" shape-rendering="crispEdges"/>
<rect x="512" y="353" width="1" height="300" fill="#9c9c9c" shape-rendering="crispEdges"/>
<rect x="460" y="475" width="69" height="12" fill="#000" shape-rendering="crispEdges"/>
<text transform="translate(461.2,483.6) scale(0.925,1)" font-size="9.7" fill="#b4b4b4" text-anchor="start" font-weight="normal" stroke="#b4b4b4" stroke-width="0.15">430.00 nS 001D</text>
<rect x="209" y="580" width="62" height="11" fill="#000" shape-rendering="crispEdges"/>
<rect x="240" y="580" width="1" height="11" fill="#9c9c9c" shape-rendering="crispEdges"/>
<text transform="translate(210,588.5) scale(0.925,1)" font-size="9.7" fill="#a8a8a8" text-anchor="start" font-weight="normal" stroke="#a8a8a8" stroke-width="0.15">90.00 nS 0019</text>
<rect x="103" y="350" width="1" height="300" fill="#0a0a0a" shape-rendering="crispEdges"/>
<rect x="21" y="366" width="82" height="1" fill="#0a0a0a" shape-rendering="crispEdges"/>
<path d="M25,353.4 H38 M29.2,353.4 V363 M36.7,353.4 V363 M25,363.3 H62.4 V353.6 H95.6 V363.3 H99.2" fill="none" stroke="#000" stroke-width="2.4" stroke-linejoin="miter"/>
<rect x="123" y="351" width="1" height="300" fill="#0a0a0a" shape-rendering="crispEdges"/>
<rect x="104" y="366" width="19" height="1" fill="#0a0a0a" shape-rendering="crispEdges"/>
<rect x="104" y="367" width="19" height="1" fill="#f0f0f0" shape-rendering="crispEdges"/>
<rect x="104" y="367" width="1" height="19" fill="#f0f0f0" shape-rendering="crispEdges"/>
<rect x="104" y="386" width="19" height="1" fill="#3a3a3a" shape-rendering="crispEdges"/>
<text transform="translate(113.6,380) scale(0.925,1)" font-size="9.7" fill="#27a052" text-anchor="middle" font-weight="normal" stroke="#27a052" stroke-width="0.15">A0</text>
<rect x="39" y="368" width="17" height="2" fill="#1a9a48" shape-rendering="crispEdges"/>
<rect x="69" y="368" width="16" height="2" fill="#de281e" shape-rendering="crispEdges"/>
<rect x="22" y="370" width="79" height="14" fill="#fafafa" shape-rendering="crispEdges"/>
<rect x="23" y="371" width="79" height="14" fill="#080808" shape-rendering="crispEdges"/>
<rect x="24" y="372" width="77" height="12" fill="#fafafa" shape-rendering="crispEdges"/>
<rect x="24" y="372" width="76" height="11" fill="#080808" shape-rendering="crispEdges"/>
<rect x="25" y="373" width="75" height="10" fill="#b2b2b2" shape-rendering="crispEdges"/>
<rect x="29" y="376" width="67" height="3" fill="#f4f4f4" shape-rendering="crispEdges"/>
<rect x="29" y="376" width="66" height="2" fill="#000" shape-rendering="crispEdges"/>
<rect x="55" y="372" width="15" height="11" fill="#484040" shape-rendering="crispEdges"/>
<rect x="55" y="372" width="14" height="10" fill="#f4f4f4" shape-rendering="crispEdges"/>
<rect x="56" y="373" width="13" height="9" fill="#dcdcdc" shape-rendering="crispEdges"/>
<rect x="57" y="373.5" width="1" height="7.5" fill="#4a4444" shape-rendering="crispEdges"/>
<rect x="60" y="373.5" width="1" height="7.5" fill="#4a4444" shape-rendering="crispEdges"/>
<rect x="63" y="373.5" width="1" height="7.5" fill="#4a4444" shape-rendering="crispEdges"/>
<rect x="66" y="373.5" width="1" height="7.5" fill="#4a4444" shape-rendering="crispEdges"/>
<rect x="104" y="387" width="19" height="1" fill="#f0f0f0" shape-rendering="crispEdges"/>
<rect x="104" y="387" width="1" height="19" fill="#f0f0f0" shape-rendering="crispEdges"/>
<rect x="104" y="406" width="19" height="1" fill="#3a3a3a" shape-rendering="crispEdges"/>
<text transform="translate(113.6,400) scale(0.925,1)" font-size="9.7" fill="#27a052" text-anchor="middle" font-weight="normal" stroke="#27a052" stroke-width="0.15">A1</text>
<rect x="39" y="385" width="17" height="5" fill="#1a9a48" shape-rendering="crispEdges"/>
<rect x="69" y="385" width="16" height="5" fill="#de281e" shape-rendering="crispEdges"/>
<rect x="22" y="390" width="79" height="14" fill="#fafafa" shape-rendering="crispEdges"/>
<rect x="23" y="391" width="79" height="14" fill="#080808" shape-rendering="crispEdges"/>
<rect x="24" y="392" width="77" height="12" fill="#fafafa" shape-rendering="crispEdges"/>
<rect x="24" y="392" width="76" height="11" fill="#080808" shape-rendering="crispEdges"/>
<rect x="25" y="393" width="75" height="10" fill="#b2b2b2" shape-rendering="crispEdges"/>
<rect x="29" y="396" width="67" height="3" fill="#f4f4f4" shape-rendering="crispEdges"/>
<rect x="29" y="396" width="66" height="2" fill="#000" shape-rendering="crispEdges"/>
<rect x="25" y="392" width="15" height="11" fill="#484040" shape-rendering="crispEdges"/>
<rect x="25" y="392" width="14" height="10" fill="#f4f4f4" shape-rendering="crispEdges"/>
<rect x="26" y="393" width="13" height="9" fill="#dcdcdc" shape-rendering="crispEdges"/>
<rect x="27" y="393.5" width="1" height="7.5" fill="#4a4444" shape-rendering="crispEdges"/>
<rect x="30" y="393.5" width="1" height="7.5" fill="#4a4444" shape-rendering="crispEdges"/>
<rect x="33" y="393.5" width="1" height="7.5" fill="#4a4444" shape-rendering="crispEdges"/>
<rect x="36" y="393.5" width="1" height="7.5" fill="#4a4444" shape-rendering="crispEdges"/>
<rect x="104" y="407" width="19" height="1" fill="#f0f0f0" shape-rendering="crispEdges"/>
<rect x="104" y="407" width="1" height="19" fill="#f0f0f0" shape-rendering="crispEdges"/>
<rect x="104" y="426" width="19" height="1" fill="#3a3a3a" shape-rendering="crispEdges"/>
<text transform="translate(113.6,420) scale(0.925,1)" font-size="9.7" fill="#27a052" text-anchor="middle" font-weight="normal" stroke="#27a052" stroke-width="0.15">A2</text>
<rect x="39" y="405" width="17" height="5" fill="#1a9a48" shape-rendering="crispEdges"/>
<rect x="69" y="405" width="16" height="5" fill="#de281e" shape-rendering="crispEdges"/>
<rect x="22" y="410" width="79" height="14" fill="#fafafa" shape-rendering="crispEdges"/>
<rect x="23" y="411" width="79" height="14" fill="#080808" shape-rendering="crispEdges"/>
<rect x="24" y="412" width="77" height="12" fill="#fafafa" shape-rendering="crispEdges"/>
<rect x="24" y="412" width="76" height="11" fill="#080808" shape-rendering="crispEdges"/>
<rect x="25" y="413" width="75" height="10" fill="#b2b2b2" shape-rendering="crispEdges"/>
<rect x="29" y="416" width="67" height="3" fill="#f4f4f4" shape-rendering="crispEdges"/>
<rect x="29" y="416" width="66" height="2" fill="#000" shape-rendering="crispEdges"/>
<rect x="25" y="412" width="15" height="11" fill="#484040" shape-rendering="crispEdges"/>
<rect x="25" y="412" width="14" height="10" fill="#f4f4f4" shape-rendering="crispEdges"/>
<rect x="26" y="413" width="13" height="9" fill="#dcdcdc" shape-rendering="crispEdges"/>
<rect x="27" y="413.5" width="1" height="7.5" fill="#4a4444" shape-rendering="crispEdges"/>
<rect x="30" y="413.5" width="1" height="7.5" fill="#4a4444" shape-rendering="crispEdges"/>
<rect x="33" y="413.5" width="1" height="7.5" fill="#4a4444" shape-rendering="crispEdges"/>
<rect x="36" y="413.5" width="1" height="7.5" fill="#4a4444" shape-rendering="crispEdges"/>
<rect x="104" y="427" width="19" height="1" fill="#f0f0f0" shape-rendering="crispEdges"/>
<rect x="104" y="427" width="1" height="19" fill="#f0f0f0" shape-rendering="crispEdges"/>
<rect x="104" y="446" width="19" height="1" fill="#3a3a3a" shape-rendering="crispEdges"/>
<text transform="translate(113.6,440) scale(0.925,1)" font-size="9.7" fill="#27a052" text-anchor="middle" font-weight="normal" stroke="#27a052" stroke-width="0.15">A3</text>
<rect x="39" y="425" width="17" height="5" fill="#1a9a48" shape-rendering="crispEdges"/>
<rect x="69" y="425" width="16" height="5" fill="#de281e" shape-rendering="crispEdges"/>
<rect x="22" y="430" width="79" height="14" fill="#fafafa" shape-rendering="crispEdges"/>
<rect x="23" y="431" width="79" height="14" fill="#080808" shape-rendering="crispEdges"/>
<rect x="24" y="432" width="77" height="12" fill="#fafafa" shape-rendering="crispEdges"/>
<rect x="24" y="432" width="76" height="11" fill="#080808" shape-rendering="crispEdges"/>
<rect x="25" y="433" width="75" height="10" fill="#b2b2b2" shape-rendering="crispEdges"/>
<rect x="29" y="436" width="67" height="3" fill="#f4f4f4" shape-rendering="crispEdges"/>
<rect x="29" y="436" width="66" height="2" fill="#000" shape-rendering="crispEdges"/>
<rect x="25" y="432" width="15" height="11" fill="#484040" shape-rendering="crispEdges"/>
<rect x="25" y="432" width="14" height="10" fill="#f4f4f4" shape-rendering="crispEdges"/>
<rect x="26" y="433" width="13" height="9" fill="#dcdcdc" shape-rendering="crispEdges"/>
<rect x="27" y="433.5" width="1" height="7.5" fill="#4a4444" shape-rendering="crispEdges"/>
<rect x="30" y="433.5" width="1" height="7.5" fill="#4a4444" shape-rendering="crispEdges"/>
<rect x="33" y="433.5" width="1" height="7.5" fill="#4a4444" shape-rendering="crispEdges"/>
<rect x="36" y="433.5" width="1" height="7.5" fill="#4a4444" shape-rendering="crispEdges"/>
<rect x="104" y="447" width="19" height="1" fill="#f0f0f0" shape-rendering="crispEdges"/>
<rect x="104" y="447" width="1" height="19" fill="#f0f0f0" shape-rendering="crispEdges"/>
<rect x="104" y="466" width="19" height="1" fill="#3a3a3a" shape-rendering="crispEdges"/>
<text transform="translate(113.6,460) scale(0.925,1)" font-size="9.7" fill="#27a052" text-anchor="middle" font-weight="normal" stroke="#27a052" stroke-width="0.15">A4</text>
<rect x="39" y="445" width="17" height="5" fill="#1a9a48" shape-rendering="crispEdges"/>
<rect x="69" y="445" width="16" height="5" fill="#de281e" shape-rendering="crispEdges"/>
<rect x="22" y="450" width="79" height="14" fill="#fafafa" shape-rendering="crispEdges"/>
<rect x="23" y="451" width="79" height="14" fill="#080808" shape-rendering="crispEdges"/>
<rect x="24" y="452" width="77" height="12" fill="#fafafa" shape-rendering="crispEdges"/>
<rect x="24" y="452" width="76" height="11" fill="#080808" shape-rendering="crispEdges"/>
<rect x="25" y="453" width="75" height="10" fill="#b2b2b2" shape-rendering="crispEdges"/>
<rect x="29" y="456" width="67" height="3" fill="#f4f4f4" shape-rendering="crispEdges"/>
<rect x="29" y="456" width="66" height="2" fill="#000" shape-rendering="crispEdges"/>
<rect x="25" y="452" width="15" height="11" fill="#484040" shape-rendering="crispEdges"/>
<rect x="25" y="452" width="14" height="10" fill="#f4f4f4" shape-rendering="crispEdges"/>
<rect x="26" y="453" width="13" height="9" fill="#dcdcdc" shape-rendering="crispEdges"/>
<rect x="27" y="453.5" width="1" height="7.5" fill="#4a4444" shape-rendering="crispEdges"/>
<rect x="30" y="453.5" width="1" height="7.5" fill="#4a4444" shape-rendering="crispEdges"/>
<rect x="33" y="453.5" width="1" height="7.5" fill="#4a4444" shape-rendering="crispEdges"/>
<rect x="36" y="453.5" width="1" height="7.5" fill="#4a4444" shape-rendering="crispEdges"/>
<rect x="104" y="467" width="19" height="1" fill="#f0f0f0" shape-rendering="crispEdges"/>
<rect x="104" y="467" width="1" height="19" fill="#f0f0f0" shape-rendering="crispEdges"/>
<rect x="104" y="486" width="19" height="1" fill="#3a3a3a" shape-rendering="crispEdges"/>
<text transform="translate(113.6,480) scale(0.925,1)" font-size="9.7" fill="#27a052" text-anchor="middle" font-weight="normal" stroke="#27a052" stroke-width="0.15">A5</text>
<rect x="39" y="465" width="17" height="5" fill="#1a9a48" shape-rendering="crispEdges"/>
<rect x="69" y="465" width="16" height="5" fill="#de281e" shape-rendering="crispEdges"/>
<rect x="22" y="470" width="79" height="14" fill="#fafafa" shape-rendering="crispEdges"/>
<rect x="23" y="471" width="79" height="14" fill="#080808" shape-rendering="crispEdges"/>
<rect x="24" y="472" width="77" height="12" fill="#fafafa" shape-rendering="crispEdges"/>
<rect x="24" y="472" width="76" height="11" fill="#080808" shape-rendering="crispEdges"/>
<rect x="25" y="473" width="75" height="10" fill="#b2b2b2" shape-rendering="crispEdges"/>
<rect x="29" y="476" width="67" height="3" fill="#f4f4f4" shape-rendering="crispEdges"/>
<rect x="29" y="476" width="66" height="2" fill="#000" shape-rendering="crispEdges"/>
<rect x="25" y="472" width="15" height="11" fill="#484040" shape-rendering="crispEdges"/>
<rect x="25" y="472" width="14" height="10" fill="#f4f4f4" shape-rendering="crispEdges"/>
<rect x="26" y="473" width="13" height="9" fill="#dcdcdc" shape-rendering="crispEdges"/>
<rect x="27" y="473.5" width="1" height="7.5" fill="#4a4444" shape-rendering="crispEdges"/>
<rect x="30" y="473.5" width="1" height="7.5" fill="#4a4444" shape-rendering="crispEdges"/>
<rect x="33" y="473.5" width="1" height="7.5" fill="#4a4444" shape-rendering="crispEdges"/>
<rect x="36" y="473.5" width="1" height="7.5" fill="#4a4444" shape-rendering="crispEdges"/>
<rect x="104" y="487" width="19" height="1" fill="#f0f0f0" shape-rendering="crispEdges"/>
<rect x="104" y="487" width="1" height="19" fill="#f0f0f0" shape-rendering="crispEdges"/>
<rect x="104" y="506" width="19" height="1" fill="#3a3a3a" shape-rendering="crispEdges"/>
<text transform="translate(113.6,500) scale(0.925,1)" font-size="9.7" fill="#27a052" text-anchor="middle" font-weight="normal" stroke="#27a052" stroke-width="0.15">A6</text>
<rect x="39" y="485" width="17" height="5" fill="#1a9a48" shape-rendering="crispEdges"/>
<rect x="69" y="485" width="16" height="5" fill="#de281e" shape-rendering="crispEdges"/>
<rect x="22" y="490" width="79" height="14" fill="#fafafa" shape-rendering="crispEdges"/>
<rect x="23" y="491" width="79" height="14" fill="#080808" shape-rendering="crispEdges"/>
<rect x="24" y="492" width="77" height="12" fill="#fafafa" shape-rendering="crispEdges"/>
<rect x="24" y="492" width="76" height="11" fill="#080808" shape-rendering="crispEdges"/>
<rect x="25" y="493" width="75" height="10" fill="#b2b2b2" shape-rendering="crispEdges"/>
<rect x="29" y="496" width="67" height="3" fill="#f4f4f4" shape-rendering="crispEdges"/>
<rect x="29" y="496" width="66" height="2" fill="#000" shape-rendering="crispEdges"/>
<rect x="25" y="492" width="15" height="11" fill="#484040" shape-rendering="crispEdges"/>
<rect x="25" y="492" width="14" height="10" fill="#f4f4f4" shape-rendering="crispEdges"/>
<rect x="26" y="493" width="13" height="9" fill="#dcdcdc" shape-rendering="crispEdges"/>
<rect x="27" y="493.5" width="1" height="7.5" fill="#4a4444" shape-rendering="crispEdges"/>
<rect x="30" y="493.5" width="1" height="7.5" fill="#4a4444" shape-rendering="crispEdges"/>
<rect x="33" y="493.5" width="1" height="7.5" fill="#4a4444" shape-rendering="crispEdges"/>
<rect x="36" y="493.5" width="1" height="7.5" fill="#4a4444" shape-rendering="crispEdges"/>
<rect x="104" y="507" width="19" height="1" fill="#f0f0f0" shape-rendering="crispEdges"/>
<rect x="104" y="507" width="1" height="19" fill="#f0f0f0" shape-rendering="crispEdges"/>
<rect x="104" y="526" width="19" height="1" fill="#3a3a3a" shape-rendering="crispEdges"/>
<text transform="translate(113.6,520) scale(0.925,1)" font-size="9.7" fill="#27a052" text-anchor="middle" font-weight="normal" stroke="#27a052" stroke-width="0.15">A7</text>
<rect x="39" y="505" width="17" height="5" fill="#1a9a48" shape-rendering="crispEdges"/>
<rect x="69" y="505" width="16" height="5" fill="#de281e" shape-rendering="crispEdges"/>
<rect x="22" y="510" width="79" height="14" fill="#fafafa" shape-rendering="crispEdges"/>
<rect x="23" y="511" width="79" height="14" fill="#080808" shape-rendering="crispEdges"/>
<rect x="24" y="512" width="77" height="12" fill="#fafafa" shape-rendering="crispEdges"/>
<rect x="24" y="512" width="76" height="11" fill="#080808" shape-rendering="crispEdges"/>
<rect x="25" y="513" width="75" height="10" fill="#b2b2b2" shape-rendering="crispEdges"/>
<rect x="29" y="516" width="67" height="3" fill="#f4f4f4" shape-rendering="crispEdges"/>
<rect x="29" y="516" width="66" height="2" fill="#000" shape-rendering="crispEdges"/>
<rect x="25" y="512" width="15" height="11" fill="#484040" shape-rendering="crispEdges"/>
<rect x="25" y="512" width="14" height="10" fill="#f4f4f4" shape-rendering="crispEdges"/>
<rect x="26" y="513" width="13" height="9" fill="#dcdcdc" shape-rendering="crispEdges"/>
<rect x="27" y="513.5" width="1" height="7.5" fill="#4a4444" shape-rendering="crispEdges"/>
<rect x="30" y="513.5" width="1" height="7.5" fill="#4a4444" shape-rendering="crispEdges"/>
<rect x="33" y="513.5" width="1" height="7.5" fill="#4a4444" shape-rendering="crispEdges"/>
<rect x="36" y="513.5" width="1" height="7.5" fill="#4a4444" shape-rendering="crispEdges"/>
<rect x="104" y="527" width="19" height="1" fill="#f0f0f0" shape-rendering="crispEdges"/>
<rect x="104" y="527" width="1" height="19" fill="#f0f0f0" shape-rendering="crispEdges"/>
<rect x="104" y="546" width="19" height="1" fill="#3a3a3a" shape-rendering="crispEdges"/>
<text transform="translate(113.6,540) scale(0.925,1)" font-size="9.7" fill="#27a052" text-anchor="middle" font-weight="normal" stroke="#27a052" stroke-width="0.15">A8</text>
<rect x="39" y="525" width="17" height="5" fill="#1a9a48" shape-rendering="crispEdges"/>
<rect x="69" y="525" width="16" height="5" fill="#de281e" shape-rendering="crispEdges"/>
<rect x="22" y="530" width="79" height="14" fill="#fafafa" shape-rendering="crispEdges"/>
<rect x="23" y="531" width="79" height="14" fill="#080808" shape-rendering="crispEdges"/>
<rect x="24" y="532" width="77" height="12" fill="#fafafa" shape-rendering="crispEdges"/>
<rect x="24" y="532" width="76" height="11" fill="#080808" shape-rendering="crispEdges"/>
<rect x="25" y="533" width="75" height="10" fill="#b2b2b2" shape-rendering="crispEdges"/>
<rect x="29" y="536" width="67" height="3" fill="#f4f4f4" shape-rendering="crispEdges"/>
<rect x="29" y="536" width="66" height="2" fill="#000" shape-rendering="crispEdges"/>
<rect x="25" y="532" width="15" height="11" fill="#484040" shape-rendering="crispEdges"/>
<rect x="25" y="532" width="14" height="10" fill="#f4f4f4" shape-rendering="crispEdges"/>
<rect x="26" y="533" width="13" height="9" fill="#dcdcdc" shape-rendering="crispEdges"/>
<rect x="27" y="533.5" width="1" height="7.5" fill="#4a4444" shape-rendering="crispEdges"/>
<rect x="30" y="533.5" width="1" height="7.5" fill="#4a4444" shape-rendering="crispEdges"/>
<rect x="33" y="533.5" width="1" height="7.5" fill="#4a4444" shape-rendering="crispEdges"/>
<rect x="36" y="533.5" width="1" height="7.5" fill="#4a4444" shape-rendering="crispEdges"/>
<rect x="104" y="547" width="19" height="1" fill="#f0f0f0" shape-rendering="crispEdges"/>
<rect x="104" y="547" width="1" height="19" fill="#f0f0f0" shape-rendering="crispEdges"/>
<rect x="104" y="566" width="19" height="1" fill="#3a3a3a" shape-rendering="crispEdges"/>
<text transform="translate(113.6,560) scale(0.925,1)" font-size="9.7" fill="#27a052" text-anchor="middle" font-weight="normal" stroke="#27a052" stroke-width="0.15">A9</text>
<rect x="39" y="545" width="17" height="5" fill="#1a9a48" shape-rendering="crispEdges"/>
<rect x="69" y="545" width="16" height="5" fill="#de281e" shape-rendering="crispEdges"/>
<rect x="22" y="550" width="79" height="14" fill="#fafafa" shape-rendering="crispEdges"/>
<rect x="23" y="551" width="79" height="14" fill="#080808" shape-rendering="crispEdges"/>
<rect x="24" y="552" width="77" height="12" fill="#fafafa" shape-rendering="crispEdges"/>
<rect x="24" y="552" width="76" height="11" fill="#080808" shape-rendering="crispEdges"/>
<rect x="25" y="553" width="75" height="10" fill="#b2b2b2" shape-rendering="crispEdges"/>
<rect x="29" y="556" width="67" height="3" fill="#f4f4f4" shape-rendering="crispEdges"/>
<rect x="29" y="556" width="66" height="2" fill="#000" shape-rendering="crispEdges"/>
<rect x="25" y="552" width="15" height="11" fill="#484040" shape-rendering="crispEdges"/>
<rect x="25" y="552" width="14" height="10" fill="#f4f4f4" shape-rendering="crispEdges"/>
<rect x="26" y="553" width="13" height="9" fill="#dcdcdc" shape-rendering="crispEdges"/>
<rect x="27" y="553.5" width="1" height="7.5" fill="#4a4444" shape-rendering="crispEdges"/>
<rect x="30" y="553.5" width="1" height="7.5" fill="#4a4444" shape-rendering="crispEdges"/>
<rect x="33" y="553.5" width="1" height="7.5" fill="#4a4444" shape-rendering="crispEdges"/>
<rect x="36" y="553.5" width="1" height="7.5" fill="#4a4444" shape-rendering="crispEdges"/>
<rect x="104" y="567" width="19" height="1" fill="#f0f0f0" shape-rendering="crispEdges"/>
<rect x="104" y="567" width="1" height="19" fill="#f0f0f0" shape-rendering="crispEdges"/>
<rect x="104" y="586" width="19" height="1" fill="#3a3a3a" shape-rendering="crispEdges"/>
<text transform="translate(113.6,580) scale(0.925,1)" font-size="9.7" fill="#27a052" text-anchor="middle" font-weight="normal" stroke="#27a052" stroke-width="0.15">A10</text>
<rect x="39" y="565" width="17" height="5" fill="#1a9a48" shape-rendering="crispEdges"/>
<rect x="69" y="565" width="16" height="5" fill="#de281e" shape-rendering="crispEdges"/>
<rect x="22" y="570" width="79" height="14" fill="#fafafa" shape-rendering="crispEdges"/>
<rect x="23" y="571" width="79" height="14" fill="#080808" shape-rendering="crispEdges"/>
<rect x="24" y="572" width="77" height="12" fill="#fafafa" shape-rendering="crispEdges"/>
<rect x="24" y="572" width="76" height="11" fill="#080808" shape-rendering="crispEdges"/>
<rect x="25" y="573" width="75" height="10" fill="#b2b2b2" shape-rendering="crispEdges"/>
<rect x="29" y="576" width="67" height="3" fill="#f4f4f4" shape-rendering="crispEdges"/>
<rect x="29" y="576" width="66" height="2" fill="#000" shape-rendering="crispEdges"/>
<rect x="25" y="572" width="15" height="11" fill="#484040" shape-rendering="crispEdges"/>
<rect x="25" y="572" width="14" height="10" fill="#f4f4f4" shape-rendering="crispEdges"/>
<rect x="26" y="573" width="13" height="9" fill="#dcdcdc" shape-rendering="crispEdges"/>
<rect x="27" y="573.5" width="1" height="7.5" fill="#4a4444" shape-rendering="crispEdges"/>
<rect x="30" y="573.5" width="1" height="7.5" fill="#4a4444" shape-rendering="crispEdges"/>
<rect x="33" y="573.5" width="1" height="7.5" fill="#4a4444" shape-rendering="crispEdges"/>
<rect x="36" y="573.5" width="1" height="7.5" fill="#4a4444" shape-rendering="crispEdges"/>
<rect x="104" y="587" width="19" height="1" fill="#f0f0f0" shape-rendering="crispEdges"/>
<rect x="104" y="587" width="1" height="19" fill="#f0f0f0" shape-rendering="crispEdges"/>
<rect x="104" y="606" width="19" height="1" fill="#3a3a3a" shape-rendering="crispEdges"/>
<text transform="translate(113.6,600) scale(0.925,1)" font-size="9.7" fill="#27a052" text-anchor="middle" font-weight="normal" stroke="#27a052" stroke-width="0.15">A11</text>
<rect x="39" y="585" width="17" height="5" fill="#1a9a48" shape-rendering="crispEdges"/>
<rect x="69" y="585" width="16" height="5" fill="#de281e" shape-rendering="crispEdges"/>
<rect x="22" y="590" width="79" height="14" fill="#fafafa" shape-rendering="crispEdges"/>
<rect x="23" y="591" width="79" height="14" fill="#080808" shape-rendering="crispEdges"/>
<rect x="24" y="592" width="77" height="12" fill="#fafafa" shape-rendering="crispEdges"/>
<rect x="24" y="592" width="76" height="11" fill="#080808" shape-rendering="crispEdges"/>
<rect x="25" y="593" width="75" height="10" fill="#b2b2b2" shape-rendering="crispEdges"/>
<rect x="29" y="596" width="67" height="3" fill="#f4f4f4" shape-rendering="crispEdges"/>
<rect x="29" y="596" width="66" height="2" fill="#000" shape-rendering="crispEdges"/>
<rect x="25" y="592" width="15" height="11" fill="#484040" shape-rendering="crispEdges"/>
<rect x="25" y="592" width="14" height="10" fill="#f4f4f4" shape-rendering="crispEdges"/>
<rect x="26" y="593" width="13" height="9" fill="#dcdcdc" shape-rendering="crispEdges"/>
<rect x="27" y="593.5" width="1" height="7.5" fill="#4a4444" shape-rendering="crispEdges"/>
<rect x="30" y="593.5" width="1" height="7.5" fill="#4a4444" shape-rendering="crispEdges"/>
<rect x="33" y="593.5" width="1" height="7.5" fill="#4a4444" shape-rendering="crispEdges"/>
<rect x="36" y="593.5" width="1" height="7.5" fill="#4a4444" shape-rendering="crispEdges"/>
<rect x="104" y="607" width="19" height="1" fill="#f0f0f0" shape-rendering="crispEdges"/>
<rect x="104" y="607" width="1" height="19" fill="#f0f0f0" shape-rendering="crispEdges"/>
<rect x="104" y="626" width="19" height="1" fill="#3a3a3a" shape-rendering="crispEdges"/>
<text transform="translate(113.6,620) scale(0.925,1)" font-size="9.7" fill="#27a052" text-anchor="middle" font-weight="normal" stroke="#27a052" stroke-width="0.15">A12</text>
<rect x="39" y="605" width="17" height="5" fill="#1a9a48" shape-rendering="crispEdges"/>
<rect x="69" y="605" width="16" height="5" fill="#de281e" shape-rendering="crispEdges"/>
<rect x="22" y="610" width="79" height="14" fill="#fafafa" shape-rendering="crispEdges"/>
<rect x="23" y="611" width="79" height="14" fill="#080808" shape-rendering="crispEdges"/>
<rect x="24" y="612" width="77" height="12" fill="#fafafa" shape-rendering="crispEdges"/>
<rect x="24" y="612" width="76" height="11" fill="#080808" shape-rendering="crispEdges"/>
<rect x="25" y="613" width="75" height="10" fill="#b2b2b2" shape-rendering="crispEdges"/>
<rect x="29" y="616" width="67" height="3" fill="#f4f4f4" shape-rendering="crispEdges"/>
<rect x="29" y="616" width="66" height="2" fill="#000" shape-rendering="crispEdges"/>
<rect x="25" y="612" width="15" height="11" fill="#484040" shape-rendering="crispEdges"/>
<rect x="25" y="612" width="14" height="10" fill="#f4f4f4" shape-rendering="crispEdges"/>
<rect x="26" y="613" width="13" height="9" fill="#dcdcdc" shape-rendering="crispEdges"/>
<rect x="27" y="613.5" width="1" height="7.5" fill="#4a4444" shape-rendering="crispEdges"/>
<rect x="30" y="613.5" width="1" height="7.5" fill="#4a4444" shape-rendering="crispEdges"/>
<rect x="33" y="613.5" width="1" height="7.5" fill="#4a4444" shape-rendering="crispEdges"/>
<rect x="36" y="613.5" width="1" height="7.5" fill="#4a4444" shape-rendering="crispEdges"/>
<rect x="104" y="627" width="19" height="1" fill="#f0f0f0" shape-rendering="crispEdges"/>
<rect x="104" y="627" width="1" height="19" fill="#f0f0f0" shape-rendering="crispEdges"/>
<rect x="104" y="646" width="19" height="1" fill="#3a3a3a" shape-rendering="crispEdges"/>
<text transform="translate(113.6,640) scale(0.925,1)" font-size="9.7" fill="#27a052" text-anchor="middle" font-weight="normal" stroke="#27a052" stroke-width="0.15">A13</text>
<rect x="39" y="625" width="17" height="5" fill="#1a9a48" shape-rendering="crispEdges"/>
<rect x="69" y="625" width="16" height="5" fill="#de281e" shape-rendering="crispEdges"/>
<rect x="22" y="630" width="79" height="14" fill="#fafafa" shape-rendering="crispEdges"/>
<rect x="23" y="631" width="79" height="14" fill="#080808" shape-rendering="crispEdges"/>
<rect x="24" y="632" width="77" height="12" fill="#fafafa" shape-rendering="crispEdges"/>
<rect x="24" y="632" width="76" height="11" fill="#080808" shape-rendering="crispEdges"/>
<rect x="25" y="633" width="75" height="10" fill="#b2b2b2" shape-rendering="crispEdges"/>
<rect x="29" y="636" width="67" height="3" fill="#f4f4f4" shape-rendering="crispEdges"/>
<rect x="29" y="636" width="66" height="2" fill="#000" shape-rendering="crispEdges"/>
<rect x="25" y="632" width="15" height="11" fill="#484040" shape-rendering="crispEdges"/>
<rect x="25" y="632" width="14" height="10" fill="#f4f4f4" shape-rendering="crispEdges"/>
<rect x="26" y="633" width="13" height="9" fill="#dcdcdc" shape-rendering="crispEdges"/>
<rect x="27" y="633.5" width="1" height="7.5" fill="#4a4444" shape-rendering="crispEdges"/>
<rect x="30" y="633.5" width="1" height="7.5" fill="#4a4444" shape-rendering="crispEdges"/>
<rect x="33" y="633.5" width="1" height="7.5" fill="#4a4444" shape-rendering="crispEdges"/>
<rect x="36" y="633.5" width="1" height="7.5" fill="#4a4444" shape-rendering="crispEdges"/>
<rect x="533" y="424" width="91" height="1" fill="#1e1e1e" shape-rendering="crispEdges"/>
<rect x="533" y="425" width="91" height="1" fill="#e8e8e8" shape-rendering="crispEdges"/>
<rect x="533" y="442" width="91" height="1" fill="#1e1e1e" shape-rendering="crispEdges"/>
<rect x="533" y="443" width="91" height="1" fill="#e8e8e8" shape-rendering="crispEdges"/>
<rect x="533" y="553" width="91" height="1" fill="#1e1e1e" shape-rendering="crispEdges"/>
<rect x="533" y="554" width="91" height="1" fill="#e8e8e8" shape-rendering="crispEdges"/>
<rect x="533" y="571" width="91" height="1" fill="#1e1e1e" shape-rendering="crispEdges"/>
<rect x="533" y="572" width="91" height="1" fill="#e8e8e8" shape-rendering="crispEdges"/>
<text x="575.2" y="438" font-size="12.3" fill="#f0a0aa" text-anchor="middle" font-weight="bold">Trigger</text>
<text transform="translate(599.3,464.2) scale(0.925,1)" font-size="9.7" fill="#1a1a1a" text-anchor="end" font-weight="normal" stroke="#1a1a1a" stroke-width="0.15">Capture</text>
<text transform="translate(599.3,482) scale(0.925,1)" font-size="9.7" fill="#1a1a1a" text-anchor="end" font-weight="normal" stroke="#1a1a1a" stroke-width="0.15">Cursors</text>
<text transform="translate(579.2,498.2) scale(0.925,1)" font-size="9.7" fill="#1a1a1a" text-anchor="middle" font-weight="normal" stroke="#1a1a1a" stroke-width="0.15">Position</text>
<rect x="604" y="453" width="15" height="15" fill="#f4f4f4" shape-rendering="crispEdges"/>
<rect x="605" y="453" width="14" height="14" fill="#101010" shape-rendering="crispEdges"/>
<rect x="605" y="454" width="13" height="13" fill="url(#capb)"/>
<rect x="604" y="472" width="15" height="15" fill="#f4f4f4" shape-rendering="crispEdges"/>
<rect x="605" y="472" width="14" height="14" fill="#e8c8cc" shape-rendering="crispEdges"/>
<rect x="605" y="473" width="13" height="13" fill="url(#curb)"/>
<path d="M573,503.6 H583" stroke="#f0a0aa" stroke-width="1.3" fill="none"/>
<path d="M569.3,503.6 L574.6,500.9 L574.6,506.3 Z M586.7,503.6 L581.4,500.9 L581.4,506.3 Z" fill="#f0a0aa"/>
<rect x="538.5" y="510.5" width="80" height="38" fill="none" stroke="#f4f4f4" stroke-width="1" shape-rendering="crispEdges"/>
<rect x="539.5" y="511.5" width="79" height="38" fill="#b0b0b0" stroke="#0a0a0a" stroke-width="1" shape-rendering="crispEdges"/>
<rect x="541" y="518" width="75.5" height="24.5" fill="url(#cyl)"/>
<rect x="541" y="518" width="75.5" height="4" fill="#d8d8d8" opacity="0.3"/>
<path d="M541.5,518 v4 M541.5,542.5 v-4M545.45,518 v2.5 M545.45,542.5 v-2.5M549.4,518 v2.5 M549.4,542.5 v-2.5M553.35,518 v2.5 M553.35,542.5 v-2.5M557.3,518 v2.5 M557.3,542.5 v-2.5M561.25,518 v4 M561.25,542.5 v-4M565.2,518 v2.5 M565.2,542.5 v-2.5M569.15,518 v2.5 M569.15,542.5 v-2.5M573.1,518 v2.5 M573.1,542.5 v-2.5M577.05,518 v2.5 M577.05,542.5 v-2.5M581,518 v4 M581,542.5 v-4M584.95,518 v2.5 M584.95,542.5 v-2.5M588.9,518 v2.5 M588.9,542.5 v-2.5M592.85,518 v2.5 M592.85,542.5 v-2.5M596.8,518 v2.5 M596.8,542.5 v-2.5M600.75,518 v4 M600.75,542.5 v-4M604.7,518 v2.5 M604.7,542.5 v-2.5M608.65,518 v2.5 M608.65,542.5 v-2.5M612.6,518 v2.5 M612.6,542.5 v-2.5M616.55,518 v2.5 M616.55,542.5 v-2.5" stroke="#303030" stroke-width="0.8" fill="none"/>
<text x="557" y="533" font-size="9.6" fill="#202020" text-anchor="middle" font-weight="normal" stroke="#202020" stroke-width="0.15">30</text>
<text x="577.2" y="533" font-size="9.6" fill="#202020" text-anchor="middle" font-weight="normal" stroke="#202020" stroke-width="0.15">25</text>
<text x="597" y="533" font-size="9.6" fill="#202020" text-anchor="middle" font-weight="normal" stroke="#202020" stroke-width="0.15">20</text>
<path d="M572.6,512.2 H582.4 L577.5,517 Z M572.6,548.2 H582.4 L577.5,543.4 Z" fill="#ff0000"/>
<text x="576.5" y="566.5" font-size="12.4" fill="#e07a20" text-anchor="middle" font-weight="bold">Horizontal</text>
<text transform="translate(578.3,583.7) scale(0.925,1)" font-size="9.7" fill="#1a1a1a" text-anchor="middle" font-weight="normal" stroke="#1a1a1a" stroke-width="0.15">Display Scale</text>
<circle cx="578.5" cy="633" r="43.5" fill="#fdfdfd"/>
<text x="541" y="638.5" font-size="6.6" fill="#202020" text-anchor="middle" font-weight="normal" stroke="#202020" stroke-width="0.15">500</text>
<line x1="548.6" y1="635.6" x2="545.1" y2="635.8" stroke="#303030" stroke-width="0.9"/>
<text x="543" y="623.4" font-size="6.6" fill="#202020" text-anchor="middle" font-weight="normal" stroke="#202020" stroke-width="0.15">200</text>
<line x1="550.1" y1="623.5" x2="546.7" y2="622.4" stroke="#303030" stroke-width="0.9"/>
<text x="553.6" y="606.8" font-size="6.6" fill="#202020" text-anchor="middle" font-weight="normal" stroke="#202020" stroke-width="0.15">100</text>
<line x1="558.8" y1="610.4" x2="556.5" y2="607.8" stroke="#303030" stroke-width="0.9"/>
<text x="569.2" y="597.9" font-size="6.6" fill="#202020" text-anchor="middle" font-weight="normal" stroke="#202020" stroke-width="0.15">50</text>
<line x1="571.3" y1="603.9" x2="570.4" y2="600.5" stroke="#303030" stroke-width="0.9"/>
<text x="588.7" y="597.9" font-size="6.6" fill="#202020" text-anchor="middle" font-weight="normal" stroke="#202020" stroke-width="0.15">20</text>
<line x1="586.4" y1="604.1" x2="587.3" y2="600.7" stroke="#303030" stroke-width="0.9"/>
<text x="604.3" y="606.8" font-size="6.6" fill="#202020" text-anchor="middle" font-weight="normal" stroke="#202020" stroke-width="0.15">10</text>
<line x1="598.6" y1="610.8" x2="601.0" y2="608.2" stroke="#303030" stroke-width="0.9"/>
<text x="615" y="624.7" font-size="6.6" fill="#202020" text-anchor="middle" font-weight="normal" stroke="#202020" stroke-width="0.15">5</text>
<line x1="607.3" y1="624.6" x2="610.7" y2="623.7" stroke="#303030" stroke-width="0.9"/>
<text x="615" y="643" font-size="6.6" fill="#202020" text-anchor="middle" font-weight="normal" stroke="#202020" stroke-width="0.15">2</text>
<line x1="607.9" y1="639.2" x2="611.3" y2="639.9" stroke="#303030" stroke-width="0.9"/>
<circle cx="578.5" cy="633" r="29.5" fill="url(#knob)" stroke="#404040" stroke-width="1.6"/>
<circle cx="579.0" cy="634" r="17" fill="url(#knob2)" stroke="#6a6a6a" stroke-width="0.8"/>
<path d="M596,621.5 L604.5,626 L598.5,632.5 Z" fill="#f08018"/>
<path d="M582,637.5 L587.5,635.5 L587,642 Z" fill="#f08018"/>
</svg>
</body></html>
